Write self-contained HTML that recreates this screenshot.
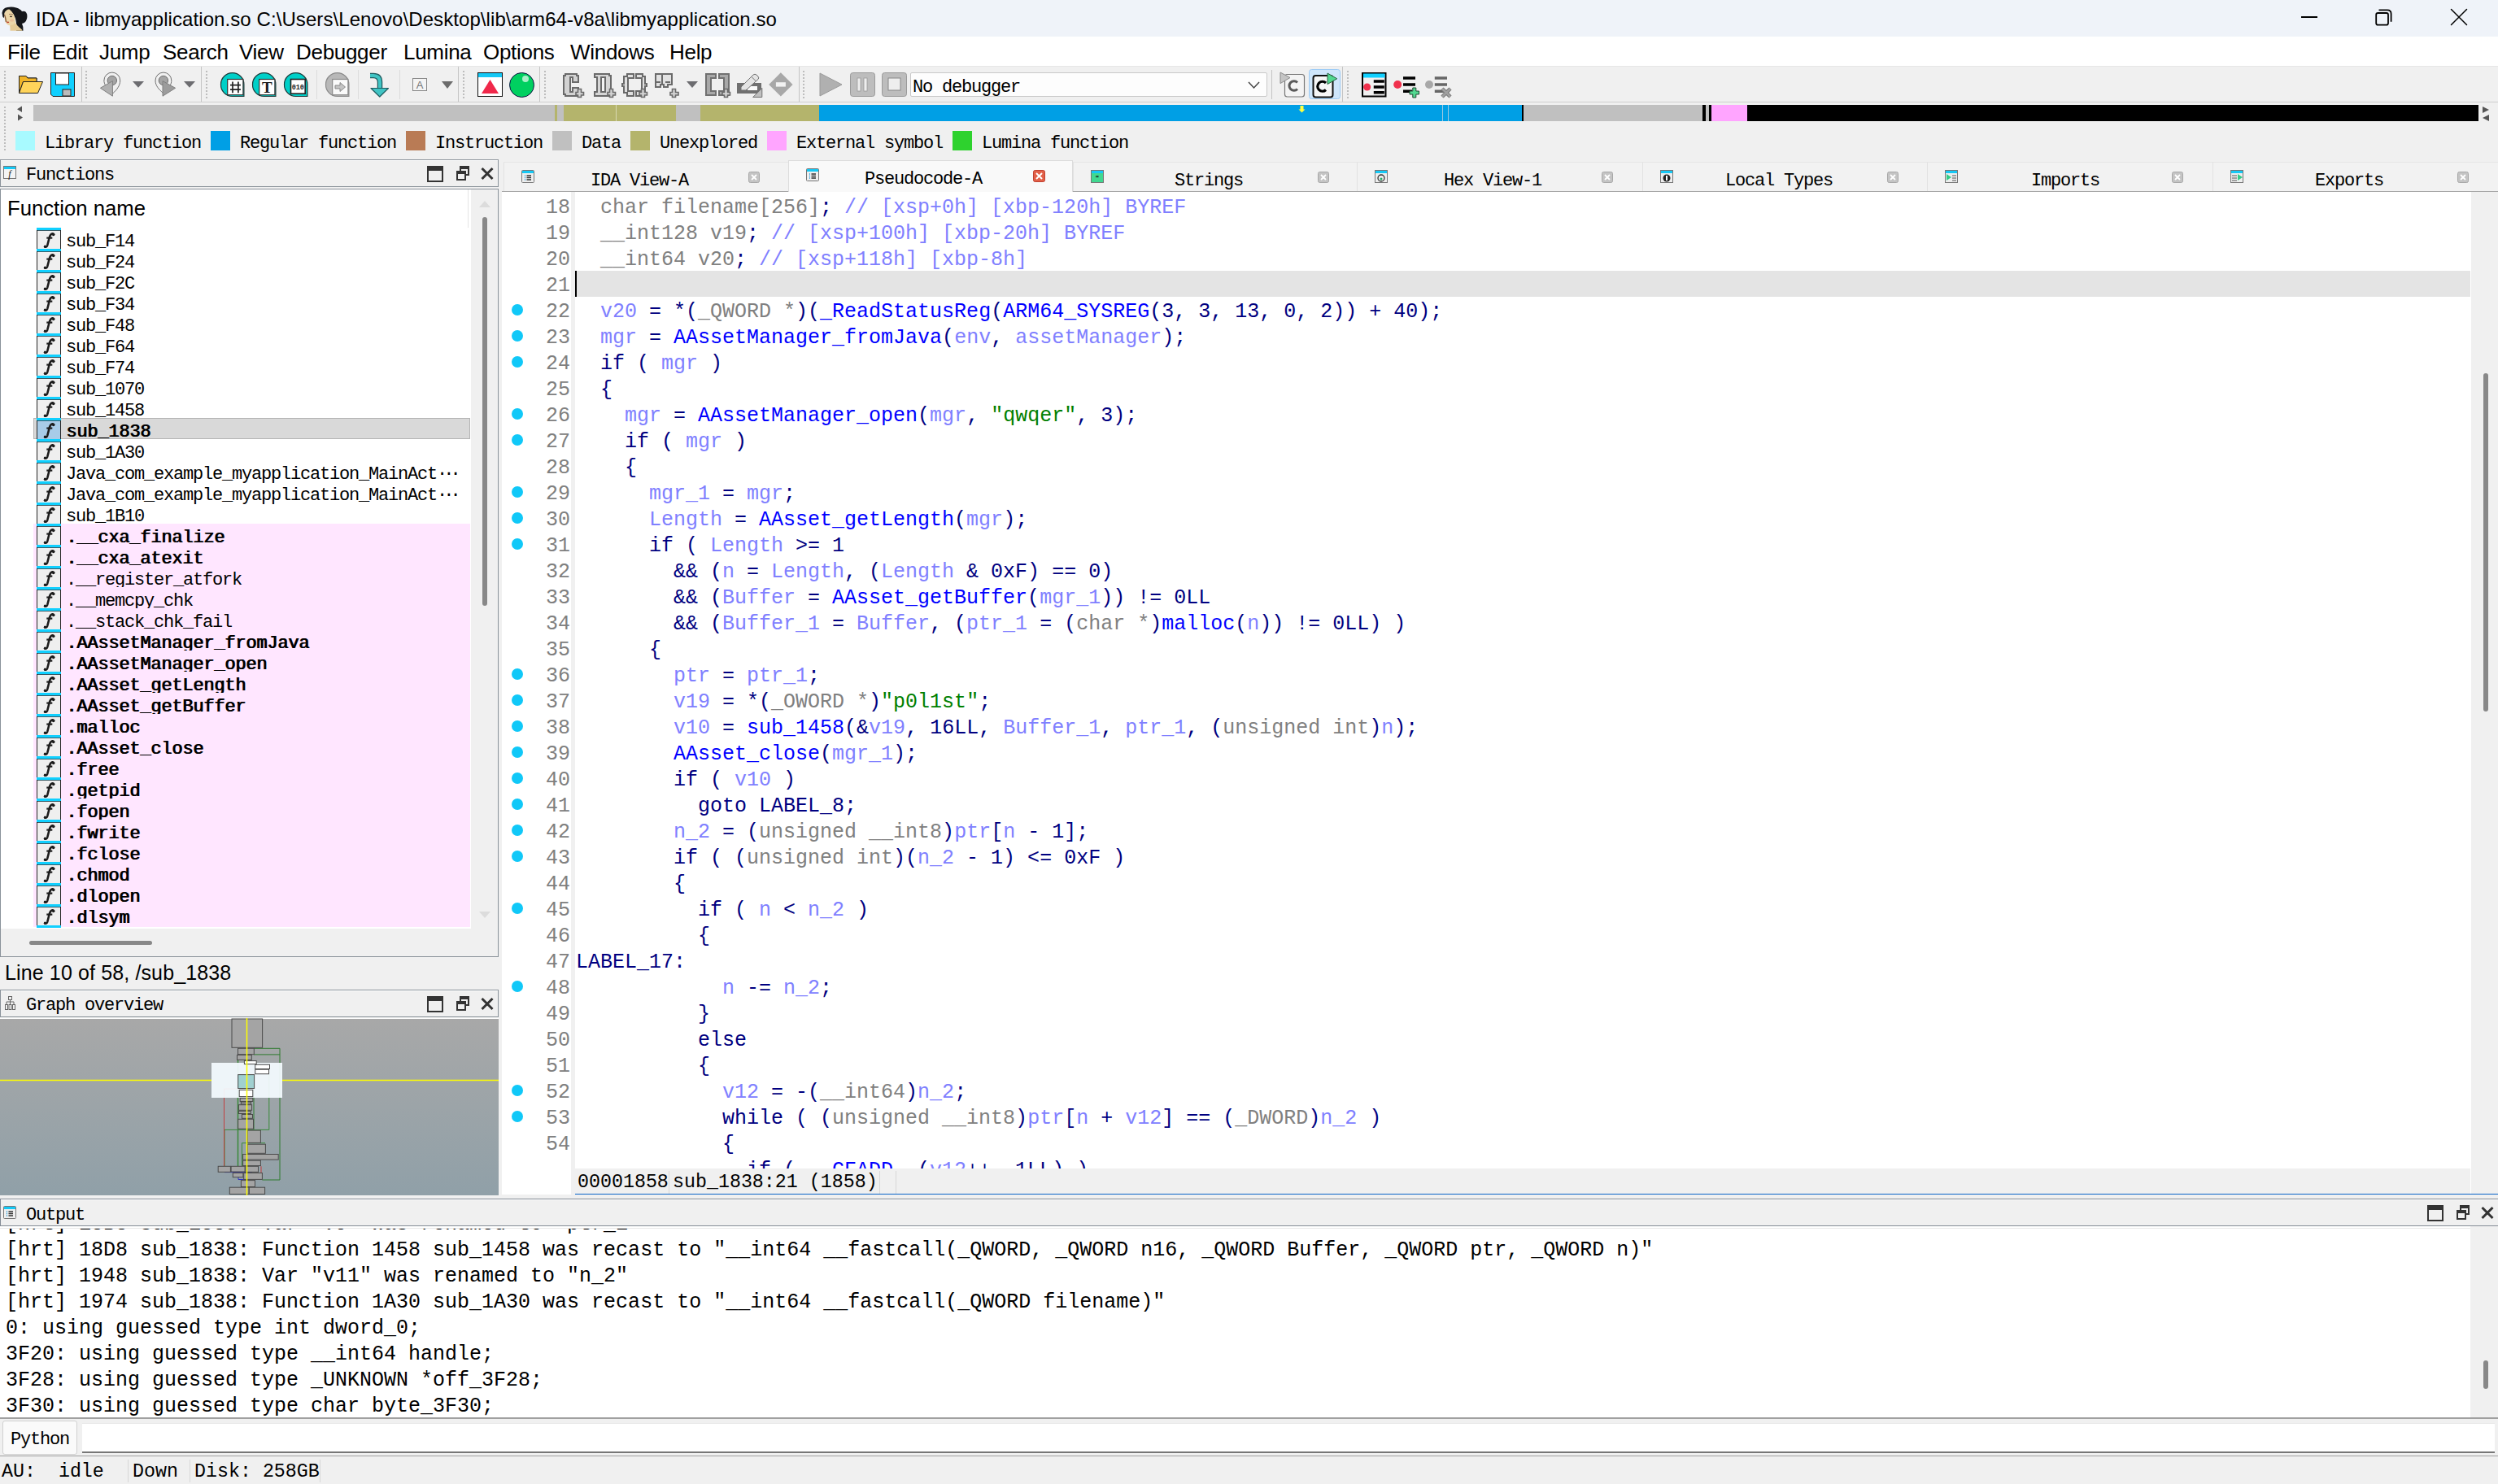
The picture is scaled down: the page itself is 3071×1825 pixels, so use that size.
<!DOCTYPE html><html><head><meta charset="utf-8"><style>
*{margin:0;padding:0;box-sizing:border-box}
html,body{width:3071px;height:1825px;overflow:hidden;background:#f0f0f0}
#root{position:relative;width:3071px;height:1825px;overflow:hidden;background:#f0f0f0}
.sans{font-family:"Liberation Sans",sans-serif;white-space:pre;line-height:1}
.ns{font-family:"Liberation Mono",monospace;font-size:22px;letter-spacing:-1.2px;white-space:pre;line-height:1;color:#000}
.code{font-family:"Liberation Mono",monospace;font-size:25px;white-space:pre;line-height:32px;color:#000080}
.v{color:#8080ff}.t{color:#808080}.f{color:#0000ff}.s{color:#008000}.k{color:#000080}
svg{position:absolute;overflow:visible}
</style></head><body><div id="root"><div style="position:absolute;left:0px;top:0px;width:3071px;height:45px;background:#eff3f9"></div>
<svg style="left:0;top:4px" width="40" height="40" viewBox="0 0 40 40">
<path d="M2.5 12 Q3 6 9 5 Q15 4 20 5.5 Q25 7 27 10 Q32 8.5 33.3 14 Q34 20 30.5 23.5 Q29 24.5 27 25 Q29 29 28.5 33.7 L20 33.7 Q21 27 19.5 21 Q18 14 12 8.5 Q8 8 6 11 Q5 15 5 18 L3.5 17 Z" fill="#15171b"/>
<path d="M5.5 12 Q8 7 11.5 7.5 Q15 10 17 14 Q19 19 19 24 Q17.5 27.5 12 27.3 Q8.5 27 6.5 23 Q5 18 5.5 12 Z" fill="#ecd6a8"/>
<path d="M12 27.2 Q16 27.5 19 24 Q20.5 27 23.5 29.5 Q26.5 31.5 27.5 33.7 H12.5 Q12.8 30 12 27.2 Z" fill="#e6cb96"/>
<path d="M5.5 14 Q7 18 7.5 23" stroke="#7a5030" stroke-width="1.2" fill="none"/>
<ellipse cx="13.5" cy="16.4" rx="1.4" ry="0.8" fill="#3a3028"/>
<path d="M11 13.5 Q14 12.8 16 14" stroke="#8a6a50" stroke-width="0.8" fill="none"/>
<ellipse cx="9.6" cy="23.4" rx="1.6" ry="0.8" fill="#c04030"/>
<ellipse cx="14.5" cy="21" rx="2.5" ry="1.8" fill="#e8b090" opacity="0.6"/>
</svg>
<div class="sans" style="position:absolute;left:44px;top:12px;font-size:24px;letter-spacing:0.08px;color:#000">IDA - libmyapplication.so C:\Users\Lenovo\Desktop\lib\arm64-v8a\libmyapplication.so</div>
<div style="position:absolute;left:2829px;top:20px;width:20px;height:2px;background:#000"></div>
<svg style="left:2915px;top:8px" width="30" height="28" viewBox="2915 8 30 28">
<rect x="2921.2" y="16" width="14.8" height="14.6" rx="2.2" fill="none" stroke="#000" stroke-width="1.8"/>
<path d="M2924.5 12.4 H2935 Q2939.6 12.4 2939.6 17 V26.8" fill="none" stroke="#000" stroke-width="1.8"/>
</svg>
<svg style="left:3010px;top:8px" width="26" height="26" viewBox="3010 8 26 26">
<path d="M3013.5 11.5 L3032.5 30.5 M3032.5 11.5 L3013.5 30.5" stroke="#000" stroke-width="1.5" stroke-linecap="round"/>
</svg>
<div style="position:absolute;left:0px;top:45px;width:3071px;height:37px;background:#fff"></div>
<div class="sans" style="position:absolute;left:9px;top:51px;font-size:26px;letter-spacing:-0.3px;color:#000">File</div>
<div class="sans" style="position:absolute;left:64px;top:51px;font-size:26px;letter-spacing:-0.3px;color:#000">Edit</div>
<div class="sans" style="position:absolute;left:122px;top:51px;font-size:26px;letter-spacing:-0.3px;color:#000">Jump</div>
<div class="sans" style="position:absolute;left:200px;top:51px;font-size:26px;letter-spacing:-0.3px;color:#000">Search</div>
<div class="sans" style="position:absolute;left:294px;top:51px;font-size:26px;letter-spacing:-0.3px;color:#000">View</div>
<div class="sans" style="position:absolute;left:364px;top:51px;font-size:26px;letter-spacing:-0.3px;color:#000">Debugger</div>
<div class="sans" style="position:absolute;left:496px;top:51px;font-size:26px;letter-spacing:-0.3px;color:#000">Lumina</div>
<div class="sans" style="position:absolute;left:594px;top:51px;font-size:26px;letter-spacing:-0.3px;color:#000">Options</div>
<div class="sans" style="position:absolute;left:701px;top:51px;font-size:26px;letter-spacing:-0.3px;color:#000">Windows</div>
<div class="sans" style="position:absolute;left:823px;top:51px;font-size:26px;letter-spacing:-0.3px;color:#000">Help</div>
<div style="position:absolute;left:0px;top:81px;width:3071px;height:1px;background:#e6e6e6"></div>
<div style="position:absolute;left:0px;top:82px;width:3071px;height:43px;background:#f0f0f0"></div>
<div style="position:absolute;left:0px;top:125px;width:3071px;height:1px;background:#cfcfcf"></div>
<div style="position:absolute;left:5px;top:87px;width:2px;height:34px;background:repeating-linear-gradient(#bdbdbd 0 2px,transparent 2px 4px)"></div>
<div style="position:absolute;left:100px;top:82px;width:1px;height:43px;background:#c4c4c4"></div>
<div style="position:absolute;left:105px;top:87px;width:2px;height:34px;background:repeating-linear-gradient(#bdbdbd 0 2px,transparent 2px 4px)"></div>
<div style="position:absolute;left:247px;top:82px;width:1px;height:43px;background:#c4c4c4"></div>
<div style="position:absolute;left:253px;top:87px;width:2px;height:34px;background:repeating-linear-gradient(#bdbdbd 0 2px,transparent 2px 4px)"></div>
<div style="position:absolute;left:563px;top:82px;width:1px;height:43px;background:#c4c4c4"></div>
<div style="position:absolute;left:569px;top:87px;width:2px;height:34px;background:repeating-linear-gradient(#bdbdbd 0 2px,transparent 2px 4px)"></div>
<div style="position:absolute;left:663px;top:82px;width:1px;height:43px;background:#c4c4c4"></div>
<div style="position:absolute;left:669px;top:87px;width:2px;height:34px;background:repeating-linear-gradient(#bdbdbd 0 2px,transparent 2px 4px)"></div>
<div style="position:absolute;left:982px;top:82px;width:1px;height:43px;background:#c4c4c4"></div>
<div style="position:absolute;left:987px;top:87px;width:2px;height:34px;background:repeating-linear-gradient(#bdbdbd 0 2px,transparent 2px 4px)"></div>
<div style="position:absolute;left:1563px;top:86px;width:1px;height:36px;background:#c4c4c4"></div>
<div style="position:absolute;left:1650px;top:82px;width:1px;height:43px;background:#c4c4c4"></div>
<div style="position:absolute;left:1656px;top:87px;width:2px;height:34px;background:repeating-linear-gradient(#bdbdbd 0 2px,transparent 2px 4px)"></div>
<div style="position:absolute;left:389px;top:86px;width:1px;height:36px;background:#dcdcdc"></div>
<div style="position:absolute;left:440px;top:86px;width:1px;height:36px;background:#dcdcdc"></div>
<div style="position:absolute;left:491px;top:86px;width:1px;height:36px;background:#dcdcdc"></div>
<svg style="left:22px;top:92px" width="32" height="24" viewBox="0 0 32 24">
<path d="M1.5 1.5 H10 L12 4 H23 V7.5 H1.5 Z" fill="#f0b428" stroke="#222" stroke-width="1"/>
<path d="M1.5 1.5 H10 L12 4 H23 V8.5 H6.5 L1.5 22.5 Z" fill="#f0b428" stroke="#222" stroke-width="1"/>
<path d="M6.5 8.5 H30.5 L24.5 22.5 H1.5 Z" fill="#ffd45a" stroke="#222" stroke-width="1"/>
</svg>
<svg style="left:62px;top:89px" width="31" height="30" viewBox="0 0 31 30">
<path d="M0.5 0.5 H29.5 V29.5 H3 L0.5 27 Z" fill="#10d0ff" stroke="#222" stroke-width="1"/>
<rect x="6.5" y="1" width="16" height="14" fill="#fff" stroke="#222" stroke-width="1"/>
<rect x="15" y="21" width="10" height="8" fill="#bbb" stroke="#222" stroke-width="1"/>
</svg>
<svg style="left:100px;top:84px" width="150" height="40" viewBox="0 0 150 40">
<path d="M39 30.6 C30 24 27.9 19 27.9 15 A9.9 9.9 0 1 1 47.7 15 C47.7 21 44 26 39 30.6 Z" fill="none" stroke="#707070" stroke-width="1"/>
<circle cx="37.8" cy="15" r="5.7" fill="#a4a4a4" stroke="#707070" stroke-width="1"/>
<path d="M23.4 24.3 L38.4 15.6 L38.4 34.2 Z" fill="#b0b0b0" stroke="#808080" stroke-width="1"/>
<path d="M163 16 H177 L170 23.7 Z" fill="#6c6c70" transform="translate(-100,0)"/>
<path d="M100.9 30.6 C95 26 91 21 91 15 A9.9 9.9 0 1 1 110.8 15 C110.8 19 108.9 24 100.9 30.6 Z" fill="none" stroke="#707070" stroke-width="1"/>
<circle cx="100.9" cy="15" r="5.7" fill="#a4a4a4" stroke="#707070" stroke-width="1"/>
<path d="M100 15.6 L115.6 24.3 L100 34.2 Z" fill="#9c9c9c" stroke="#808080" stroke-width="1"/>
<path d="M126 16 H140 L133 23.7 Z" fill="#6c6c70"/>
</svg>
<svg style="left:271px;top:84px" width="31" height="36" viewBox="0 0 31 36">
<path d="M0.5 19.8 A14.2 14.2 0 0 1 28.9 19.8 V34.5 H14.7 A14.2 14.2 0 0 1 0.5 19.8 Z" fill="#00d0c8" stroke="#1e3a3a" stroke-width="1.2"/>
<rect x="8.7" y="13.5" width="19.2" height="19.2" fill="#fff" stroke="#333" stroke-width="1.2"/><path d="M15 16.5 V30.3 M21.9 16.5 V30.3 M12 20.7 H24.9 M12 26.1 H24.9" stroke="#222" stroke-width="1.7"/>
</svg>
<svg style="left:310px;top:84px" width="31" height="36" viewBox="0 0 31 36">
<path d="M0.5 19.8 A14.2 14.2 0 0 1 28.9 19.8 V34.5 H14.7 A14.2 14.2 0 0 1 0.5 19.8 Z" fill="#00d0c8" stroke="#1e3a3a" stroke-width="1.2"/>
<rect x="8.7" y="13.5" width="19.2" height="19.2" fill="#fff" stroke="#333" stroke-width="1.2"/><text x="18.3" y="30" font-family="Liberation Serif" font-weight="bold" font-size="19" text-anchor="middle" fill="#1a1a1a">T</text>
</svg>
<svg style="left:349px;top:84px" width="31" height="36" viewBox="0 0 31 36">
<path d="M0.5 19.8 A14.2 14.2 0 0 1 28.9 19.8 V34.5 H14.7 A14.2 14.2 0 0 1 0.5 19.8 Z" fill="#00d0c8" stroke="#1e3a3a" stroke-width="1.2"/>
<rect x="8.5" y="13.5" width="17.7" height="17.7" fill="#fff" stroke="#222" stroke-width="1.6"/><text x="17.3" y="26" font-family="Liberation Mono" font-weight="bold" font-size="8.5" text-anchor="middle" fill="#222">010</text>
</svg>
<svg style="left:400px;top:84px" width="31" height="36" viewBox="0 0 31 36">
<path d="M0.5 19.8 A14.2 14.2 0 0 1 28.9 19.8 V34.5 H14.7 A14.2 14.2 0 0 1 0.5 19.8 Z" fill="#b8b8b8" stroke="#8a8a8a" stroke-width="1.2"/>
<rect x="8.7" y="13.5" width="19.2" height="19.2" fill="#fafafa" stroke="#8a8a8a" stroke-width="1.2"/>
<path d="M12 21 H18 V17.5 L24.5 23 L18 28.5 V25 H12 Z" fill="#c4c4c4" stroke="#888" stroke-width="1"/>
</svg>
<svg style="left:450px;top:84px" width="32" height="38" viewBox="450 84 32 38">
<path d="M455 93 H459 Q467 93 467 101 V110" fill="none" stroke="#1f5c60" stroke-width="6.5"/>
<path d="M455 93 H459 Q467 93 467 101 V111" fill="none" stroke="#40c4c4" stroke-width="4"/>
<path d="M456 108.5 H477.5 L466.8 119 Z" fill="#40c4c4" stroke="#1f5c60" stroke-width="1.2" stroke-linejoin="round"/>
</svg>
<svg style="left:507px;top:96px" width="18" height="16" viewBox="0 0 18 16">
<rect x="0.5" y="0.5" width="17" height="15" fill="#f4f4f4" stroke="#888"/>
<text x="9" y="13" font-family="Liberation Sans" font-size="13" text-anchor="middle" fill="#777">A</text>
</svg>
<svg style="left:543px;top:100px" width="14" height="9" viewBox="0 0 14 9"><path d="M0 0 H14 L7 9 Z" fill="#6c6c6c"/></svg>
<svg style="left:587px;top:89px" width="31" height="30" viewBox="0 0 31 30">
<rect x="0.5" y="0.5" width="30" height="29" fill="#fff" stroke="#111" stroke-width="1"/>
<rect x="1" y="1" width="29" height="5" fill="#15c8f5"/>
<path d="M15.5 9 L26 26 H5 Z" fill="#f0284a"/>
</svg>
<svg style="left:626px;top:89px" width="31" height="31" viewBox="0 0 31 31">
<circle cx="15.5" cy="15.5" r="15" fill="#00d060" stroke="#114" stroke-width="1"/>
<circle cx="20" cy="8" r="4" fill="#a8f0c8"/>
</svg>
<svg style="left:688px;top:85px" width="300" height="40" viewBox="0 0 300 40">
<g stroke="#6a6a6a" stroke-width="2" stroke-linejoin="miter">
<path d="M7 6 H21 V8 H23 V16 H16 V10 H13 V28 H16 V23 H23 V31 H21 V33 H7 V31 H5 V8 H7 Z" fill="#d2d2d2"/>
<path d="M43 6 H61 V8 H63 V33 H43 V28 H46 V10 H43 Z" fill="#d6d6d6"/>
<rect x="51" y="10" width="5" height="18" fill="#f4f4f4"/>
<path d="M83 6 H91 V11 H84 V27 H91 V33 H83 V29 H79 V21 H77 V18 H79 V9 H83 Z" fill="#e0e0e0"/>
<path d="M94 6 H102 V9 H105 V18 H107 V21 H105 V29 H102 V33 H94 V27 H101 V11 H94 Z" fill="#e0e0e0"/>
<path d="M118 6 H138 V19 H133 V22 H128 V19 H124 V22 H118 Z" fill="#e2e2e2"/>
<path d="M126 6 V19 M118 16 H124 M130 16 H136" fill="none"/>
</g>
<g stroke="#6a6a6a" stroke-width="1.6" fill="#d4d4d4">
<path d="M22.5 24.5 H26.5 V28.5 H29.5 V32 H26.5 V34.5 H22.5 V32 H20 V28.5 H22.5 Z"/>
<path d="M61.5 24.5 H65.5 V28.5 H68.5 V32 H65.5 V34.5 H61.5 V32 H59 V28.5 H61.5 Z"/>
<path d="M100.5 24.5 H104.5 V28.5 H107.5 V32 H104.5 V34.5 H100.5 V32 H98 V28.5 H100.5 Z"/>
<path d="M138.5 24.5 H142.5 V28.5 H146 V32 H142.5 V34.5 H138.5 V32 H136 V28.5 H138.5 Z"/>
</g>
<path d="M156 15 H170 L163 23 Z" fill="#6c6c70"/>
<g stroke="#707070" stroke-width="2" fill="#a8a8a8">
<path d="M180 6 H192 V11 H186 V27 H192 V32 H180 Z"/>
<path d="M196 6 H208 V32 H196 V27 H202 V11 H196 Z"/>
</g>
<path d="M202.5 24.5 H206.5 V28.5 H209.5 V32 H206.5 V34.5 H202.5 V32 H200 V28.5 H202.5 Z" fill="#d4d4d4" stroke="#6a6a6a" stroke-width="1.6"/>
<rect x="218" y="17" width="30" height="13" fill="#707070"/>
<rect x="231" y="21" width="12" height="5" fill="#fafafa"/>
<path d="M223 22 L238 7 Q240 5.5 242 7 L244 9 Q245.5 11 244 12.5 L229 26 H223 Z" fill="#e4e4e4" stroke="#707070" stroke-width="1"/>
<path d="M236 9.5 L241.5 15" stroke="#707070" stroke-width="1"/>
<path d="M237.7 34.5 H248.8 V23.4 Z" fill="#c0c0c0" stroke="#707070" stroke-width="1"/>
<path d="M271.9 4.2 L286.6 18.9 L271.9 33.6 L257.2 18.9 Z" fill="#a8a8a8"/>
<rect x="265.9" y="16.2" width="12" height="5.4" fill="#f2f2f2"/>
</svg>
<svg style="left:1007px;top:89px" width="30" height="30" viewBox="0 0 30 30">
<path d="M1 1 L28 15 L1 29 Z" fill="#b0b0b0" stroke="#999" stroke-width="1"/>
</svg>
<svg style="left:1045px;top:89px" width="31" height="30" viewBox="0 0 31 30">
<rect x="0.5" y="0.5" width="30" height="29" rx="3" fill="#bdbdbd" stroke="#9a9a9a"/>
<rect x="9" y="7" width="4" height="16" fill="#eee" stroke="#999" stroke-width="0.8"/>
<rect x="17" y="7" width="4" height="16" fill="#eee" stroke="#999" stroke-width="0.8"/>
</svg>
<svg style="left:1084px;top:89px" width="31" height="30" viewBox="0 0 31 30">
<rect x="0.5" y="0.5" width="30" height="29" rx="3" fill="#bdbdbd" stroke="#9a9a9a"/>
<rect x="8" y="7" width="15" height="15" fill="#eee" stroke="#888" stroke-width="1"/>
</svg>
<div style="position:absolute;left:1119px;top:89px;width:439px;height:30px;background:#fdfdfd;border:1px solid #c8c8c8;border-radius:2px"></div>
<div class="ns" style="position:absolute;left:1122px;top:97px;">No debugger</div>
<svg style="left:1534px;top:100px" width="15" height="9" viewBox="0 0 15 9"><path d="M1 1 L7.5 8 L14 1" fill="none" stroke="#444" stroke-width="1.5"/></svg>
<svg style="left:1560px;top:80px" width="240" height="45" viewBox="1560 80 240 45">
<rect x="1579.5" y="91.5" width="24" height="27.5" rx="3" fill="#f4f4f4" stroke="#777" stroke-width="1.2"/>
<path d="M1574 89 L1586 95.5 L1574 102.6 Z" fill="#c4c4c4" stroke="#8a8a8a" stroke-width="1"/>
<path d="M1595 101.5 A5.8 5.8 0 1 0 1595 109.5" fill="none" stroke="#5a5a5a" stroke-width="3"/>
<rect x="1609.5" y="85.5" width="38" height="36" rx="3" fill="#cfe6fb" stroke="#9ccbf5" stroke-width="1"/>
<rect x="1614.5" y="93" width="24" height="26.5" rx="3" fill="#f6f6f6" stroke="#111" stroke-width="2"/>
<path d="M1630 102 A6 6 0 1 0 1630 110.5" fill="none" stroke="#000" stroke-width="3.2"/>
<path d="M1632 90 L1643.7 96.8 L1632 103.5 Z" fill="#52d890" stroke="#2a6040" stroke-width="1"/>
<rect x="1675" y="90" width="28.5" height="28.5" fill="#f0f0f0" stroke="#000" stroke-width="2"/>
<rect x="1676" y="90.5" width="26.5" height="5" fill="#10d0ff"/>
<circle cx="1680.7" cy="107" r="4.5" fill="#f0304c"/>
<path d="M1688.8 100 H1701.8 M1688.8 107 H1701.8 M1688.8 113.8 H1701.8" stroke="#000" stroke-width="3.5"/>
<circle cx="1718.2" cy="104" r="5" fill="#f0304c"/>
<path d="M1725 95.9 H1740 M1725 104 H1740 M1725 112.2 H1736" stroke="#000" stroke-width="3.5"/>
<path d="M1736.8 108 H1740.8 V112 H1744.5 V116 H1740.8 V120 H1736.8 V116 H1733 V112 H1736.8 Z" fill="#52d890" stroke="#1e4a30" stroke-width="1"/>
<circle cx="1757" cy="104" r="5" fill="#a8a8a8"/>
<path d="M1763.8 95.9 H1779 M1763.8 104 H1779 M1763.8 112.2 H1775" stroke="#666" stroke-width="3.5"/>
<path d="M1773 109 L1783 119 M1783 109 L1773 119" stroke="#777" stroke-width="4.5"/>
<path d="M1773 109 L1783 119 M1783 109 L1773 119" stroke="#a0a0a0" stroke-width="2.5"/>
</svg>
<div style="position:absolute;left:5px;top:131px;width:2px;height:56px;background:repeating-linear-gradient(#bdbdbd 0 2px,transparent 2px 4px)"></div>
<svg style="left:0;top:130px" width="40" height="20" viewBox="0 130 40 20"><path d="M27 130.5 L21 134.3 L27 138 Z M22 140.5 L28 144.5 L22 148.5 Z" fill="#555"/></svg>
<svg style="left:3050px;top:130px" width="12" height="20" viewBox="0 0 12 20"><path d="M2 1 L10 5 L2 9 Z M10 11 L2 15 L10 19 Z" fill="#555"/></svg>
<div style="position:absolute;left:41px;top:129px;width:641px;height:20px;background:#c0c0c0"></div>
<div style="position:absolute;left:682px;top:129px;width:3px;height:20px;background:#b4b46c"></div>
<div style="position:absolute;left:685px;top:129px;width:8px;height:20px;background:#c0c0c0"></div>
<div style="position:absolute;left:693px;top:129px;width:64px;height:20px;background:#b4b46c"></div>
<div style="position:absolute;left:757px;top:129px;width:1px;height:20px;background:#d8d8b0"></div>
<div style="position:absolute;left:758px;top:129px;width:73px;height:20px;background:#b4b46c"></div>
<div style="position:absolute;left:831px;top:129px;width:30px;height:20px;background:#c0c0c0"></div>
<div style="position:absolute;left:861px;top:129px;width:146px;height:20px;background:#b4b46c"></div>
<div style="position:absolute;left:1007px;top:129px;width:864px;height:20px;background:#009fe5"></div>
<div style="position:absolute;left:1871px;top:129px;width:2px;height:20px;background:#000"></div>
<div style="position:absolute;left:1873px;top:129px;width:220px;height:20px;background:#c0c0c0"></div>
<div style="position:absolute;left:2093px;top:129px;width:4px;height:20px;background:#000"></div>
<div style="position:absolute;left:2097px;top:129px;width:4px;height:20px;background:#c0c0c0"></div>
<div style="position:absolute;left:2101px;top:129px;width:3px;height:20px;background:#000"></div>
<div style="position:absolute;left:2104px;top:129px;width:44px;height:20px;background:#ffa5ff"></div>
<div style="position:absolute;left:2148px;top:129px;width:899px;height:20px;background:#000"></div>
<div style="position:absolute;left:1773px;top:129px;width:1px;height:20px;background:#9cc8e0"></div>
<div style="position:absolute;left:1780px;top:129px;width:1px;height:20px;background:#9cc8e0"></div>
<svg style="left:1596px;top:130px" width="9" height="9" viewBox="0 0 9 9"><path d="M2.5 0 H6.5 V4.5 H8.5 L4.5 8.5 L0.5 4.5 H2.5 Z" fill="#ffff40"/></svg>
<div style="position:absolute;left:19px;top:161px;width:24px;height:24px;background:#a8faff"></div>
<div class="ns" style="position:absolute;left:55px;top:166px;">Library function</div>
<div style="position:absolute;left:259px;top:161px;width:24px;height:24px;background:#009fe5"></div>
<div class="ns" style="position:absolute;left:295px;top:166px;">Regular function</div>
<div style="position:absolute;left:499px;top:161px;width:24px;height:24px;background:#b97b55"></div>
<div class="ns" style="position:absolute;left:535px;top:166px;">Instruction</div>
<div style="position:absolute;left:679px;top:161px;width:24px;height:24px;background:#c0c0c0"></div>
<div class="ns" style="position:absolute;left:715px;top:166px;">Data</div>
<div style="position:absolute;left:775px;top:161px;width:24px;height:24px;background:#b4b46c"></div>
<div class="ns" style="position:absolute;left:811px;top:166px;">Unexplored</div>
<div style="position:absolute;left:943px;top:161px;width:24px;height:24px;background:#ffa5ff"></div>
<div class="ns" style="position:absolute;left:979px;top:166px;">External symbol</div>
<div style="position:absolute;left:1171px;top:161px;width:24px;height:24px;background:#2ed22e"></div>
<div class="ns" style="position:absolute;left:1207px;top:166px;">Lumina function</div>
<div style="position:absolute;left:0px;top:196px;width:613px;height:34px;background:#f0f0f0;border:1px solid #8a929a;box-shadow:inset 0 1px 0 #fff"></div>
<svg style="left:4px;top:204px" width="16" height="16" viewBox="0 0 16 16"><rect x="0.5" y="0.5" width="15" height="15" fill="#f4f4f4" stroke="#777"/><rect x="1" y="1" width="14" height="3" fill="#15c8f5"/><text x="8" y="14" font-family="Liberation Serif" font-style="italic" font-size="12" text-anchor="middle" fill="#222">f</text></svg>
<div class="ns" style="position:absolute;left:32px;top:205px;">Functions</div>
<svg style="left:525px;top:204px" width="84" height="22" viewBox="0 0 84 22"><g fill="none" stroke="#333" stroke-width="2"><rect x="1" y="1" width="18" height="18"/><rect x="41" y="1" width="10" height="10"/><rect x="37" y="7" width="10" height="10" fill="#f0f0f0"/><path d="M67.5 3 L80.5 16 M80.5 3 L67.5 16" stroke-width="3"/></g><rect x="1" y="1" width="18" height="5" fill="#333"/><rect x="41" y="1" width="10" height="3" fill="#333"/><rect x="37" y="7" width="10" height="3" fill="#333"/></svg>
<div style="position:absolute;left:0px;top:232px;width:613px;height:945px;background:#fff;border:1px solid #8a929a"></div>
<div class="sans" style="position:absolute;left:9px;top:244px;font-size:25.7px;color:#000">Function name</div>
<div style="position:absolute;left:575px;top:233px;width:1px;height:47px;background:#e4e4e4"></div>
<div style="position:absolute;left:579px;top:233px;width:33px;height:943px;background:#f0f0f0"></div>
<svg style="left:588px;top:246px" width="16" height="10" viewBox="0 0 16 10"><path d="M1 9 L8 1 L15 9 Z" fill="#dcdcdc"/></svg>
<svg style="left:588px;top:1120px" width="16" height="10" viewBox="0 0 16 10"><path d="M1 1 L8 9 L15 1 Z" fill="#dcdcdc"/></svg>
<div style="position:absolute;left:593px;top:267px;width:6px;height:478px;background:#888;border-radius:3px"></div>
<div style="position:absolute;left:1px;top:1142px;width:578px;height:34px;background:#f0f0f0"></div>
<div style="position:absolute;left:36px;top:1157px;width:151px;height:5px;background:#888;border-radius:3px"></div>
<div style="position:absolute;left:45px;top:280px;width:30px;height:26px;background:#efefef;border-left:1.5px solid #262626;border-right:1.5px solid #262626"></div>
<div style="position:absolute;left:45px;top:280px;width:30px;height:3px;background:#10d0ff"></div>
<div style="position:absolute;left:46px;top:283px;width:28px;height:1px;background:#3a5a64"></div>
<div class="ns" style="position:absolute;left:81px;top:287px;">sub_F14</div>
<div style="position:absolute;left:45px;top:306px;width:30px;height:26px;background:#efefef;border-left:1.5px solid #262626;border-right:1.5px solid #262626"></div>
<div style="position:absolute;left:45px;top:306px;width:30px;height:3px;background:#10d0ff"></div>
<div style="position:absolute;left:46px;top:309px;width:28px;height:1px;background:#3a5a64"></div>
<div class="ns" style="position:absolute;left:81px;top:313px;">sub_F24</div>
<div style="position:absolute;left:45px;top:332px;width:30px;height:26px;background:#efefef;border-left:1.5px solid #262626;border-right:1.5px solid #262626"></div>
<div style="position:absolute;left:45px;top:332px;width:30px;height:3px;background:#10d0ff"></div>
<div style="position:absolute;left:46px;top:335px;width:28px;height:1px;background:#3a5a64"></div>
<div class="ns" style="position:absolute;left:81px;top:339px;">sub_F2C</div>
<div style="position:absolute;left:45px;top:358px;width:30px;height:26px;background:#efefef;border-left:1.5px solid #262626;border-right:1.5px solid #262626"></div>
<div style="position:absolute;left:45px;top:358px;width:30px;height:3px;background:#10d0ff"></div>
<div style="position:absolute;left:46px;top:361px;width:28px;height:1px;background:#3a5a64"></div>
<div class="ns" style="position:absolute;left:81px;top:365px;">sub_F34</div>
<div style="position:absolute;left:45px;top:384px;width:30px;height:26px;background:#efefef;border-left:1.5px solid #262626;border-right:1.5px solid #262626"></div>
<div style="position:absolute;left:45px;top:384px;width:30px;height:3px;background:#10d0ff"></div>
<div style="position:absolute;left:46px;top:387px;width:28px;height:1px;background:#3a5a64"></div>
<div class="ns" style="position:absolute;left:81px;top:391px;">sub_F48</div>
<div style="position:absolute;left:45px;top:410px;width:30px;height:26px;background:#efefef;border-left:1.5px solid #262626;border-right:1.5px solid #262626"></div>
<div style="position:absolute;left:45px;top:410px;width:30px;height:3px;background:#10d0ff"></div>
<div style="position:absolute;left:46px;top:413px;width:28px;height:1px;background:#3a5a64"></div>
<div class="ns" style="position:absolute;left:81px;top:417px;">sub_F64</div>
<div style="position:absolute;left:45px;top:436px;width:30px;height:26px;background:#efefef;border-left:1.5px solid #262626;border-right:1.5px solid #262626"></div>
<div style="position:absolute;left:45px;top:436px;width:30px;height:3px;background:#10d0ff"></div>
<div style="position:absolute;left:46px;top:439px;width:28px;height:1px;background:#3a5a64"></div>
<div class="ns" style="position:absolute;left:81px;top:443px;">sub_F74</div>
<div style="position:absolute;left:45px;top:462px;width:30px;height:26px;background:#efefef;border-left:1.5px solid #262626;border-right:1.5px solid #262626"></div>
<div style="position:absolute;left:45px;top:462px;width:30px;height:3px;background:#10d0ff"></div>
<div style="position:absolute;left:46px;top:465px;width:28px;height:1px;background:#3a5a64"></div>
<div class="ns" style="position:absolute;left:81px;top:469px;">sub_1070</div>
<div style="position:absolute;left:45px;top:488px;width:30px;height:26px;background:#efefef;border-left:1.5px solid #262626;border-right:1.5px solid #262626"></div>
<div style="position:absolute;left:45px;top:488px;width:30px;height:3px;background:#10d0ff"></div>
<div style="position:absolute;left:46px;top:491px;width:28px;height:1px;background:#3a5a64"></div>
<div class="ns" style="position:absolute;left:81px;top:495px;">sub_1458</div>
<div style="position:absolute;left:41px;top:514px;width:537px;height:26px;background:#d9d9d9;border:1px solid #b4b4b4"></div>
<div style="position:absolute;left:45px;top:514px;width:30px;height:26px;background:#a8cce8;border-left:1.5px solid #262626;border-right:1.5px solid #262626"></div>
<div style="position:absolute;left:45px;top:514px;width:30px;height:3px;background:#10d0ff"></div>
<div style="position:absolute;left:46px;top:517px;width:28px;height:1px;background:#3a5a64"></div>
<div class="ns" style="position:absolute;left:81px;top:521px;text-shadow:1px 0 0 #000;letter-spacing:-0.2px;">sub_1838</div>
<div style="position:absolute;left:45px;top:540px;width:30px;height:26px;background:#efefef;border-left:1.5px solid #262626;border-right:1.5px solid #262626"></div>
<div style="position:absolute;left:45px;top:540px;width:30px;height:3px;background:#10d0ff"></div>
<div style="position:absolute;left:46px;top:543px;width:28px;height:1px;background:#3a5a64"></div>
<div class="ns" style="position:absolute;left:81px;top:547px;">sub_1A30</div>
<div style="position:absolute;left:45px;top:566px;width:30px;height:26px;background:#efefef;border-left:1.5px solid #262626;border-right:1.5px solid #262626"></div>
<div style="position:absolute;left:45px;top:566px;width:30px;height:3px;background:#10d0ff"></div>
<div style="position:absolute;left:46px;top:569px;width:28px;height:1px;background:#3a5a64"></div>
<div class="ns" style="position:absolute;left:81px;top:573px;">Java_com_example_myapplication_MainAct<span style="letter-spacing:-5px">···</span></div>
<div style="position:absolute;left:45px;top:592px;width:30px;height:26px;background:#efefef;border-left:1.5px solid #262626;border-right:1.5px solid #262626"></div>
<div style="position:absolute;left:45px;top:592px;width:30px;height:3px;background:#10d0ff"></div>
<div style="position:absolute;left:46px;top:595px;width:28px;height:1px;background:#3a5a64"></div>
<div class="ns" style="position:absolute;left:81px;top:599px;">Java_com_example_myapplication_MainAct<span style="letter-spacing:-5px">···</span></div>
<div style="position:absolute;left:45px;top:618px;width:30px;height:26px;background:#efefef;border-left:1.5px solid #262626;border-right:1.5px solid #262626"></div>
<div style="position:absolute;left:45px;top:618px;width:30px;height:3px;background:#10d0ff"></div>
<div style="position:absolute;left:46px;top:621px;width:28px;height:1px;background:#3a5a64"></div>
<div class="ns" style="position:absolute;left:81px;top:625px;">sub_1B10</div>
<div style="position:absolute;left:41px;top:644px;width:537px;height:26px;background:#ffe6ff"></div>
<div style="position:absolute;left:45px;top:644px;width:30px;height:26px;background:#efefef;border-left:1.5px solid #262626;border-right:1.5px solid #262626"></div>
<div style="position:absolute;left:45px;top:644px;width:30px;height:3px;background:#10d0ff"></div>
<div style="position:absolute;left:46px;top:647px;width:28px;height:1px;background:#3a5a64"></div>
<div class="ns" style="position:absolute;left:81px;top:651px;text-shadow:1px 0 0 #000;letter-spacing:-0.2px;">.__cxa_finalize</div>
<div style="position:absolute;left:41px;top:670px;width:537px;height:26px;background:#ffe6ff"></div>
<div style="position:absolute;left:45px;top:670px;width:30px;height:26px;background:#efefef;border-left:1.5px solid #262626;border-right:1.5px solid #262626"></div>
<div style="position:absolute;left:45px;top:670px;width:30px;height:3px;background:#10d0ff"></div>
<div style="position:absolute;left:46px;top:673px;width:28px;height:1px;background:#3a5a64"></div>
<div class="ns" style="position:absolute;left:81px;top:677px;text-shadow:1px 0 0 #000;letter-spacing:-0.2px;">.__cxa_atexit</div>
<div style="position:absolute;left:41px;top:696px;width:537px;height:26px;background:#ffe6ff"></div>
<div style="position:absolute;left:45px;top:696px;width:30px;height:26px;background:#efefef;border-left:1.5px solid #262626;border-right:1.5px solid #262626"></div>
<div style="position:absolute;left:45px;top:696px;width:30px;height:3px;background:#10d0ff"></div>
<div style="position:absolute;left:46px;top:699px;width:28px;height:1px;background:#3a5a64"></div>
<div class="ns" style="position:absolute;left:81px;top:703px;">.__register_atfork</div>
<div style="position:absolute;left:41px;top:722px;width:537px;height:26px;background:#ffe6ff"></div>
<div style="position:absolute;left:45px;top:722px;width:30px;height:26px;background:#efefef;border-left:1.5px solid #262626;border-right:1.5px solid #262626"></div>
<div style="position:absolute;left:45px;top:722px;width:30px;height:3px;background:#10d0ff"></div>
<div style="position:absolute;left:46px;top:725px;width:28px;height:1px;background:#3a5a64"></div>
<div class="ns" style="position:absolute;left:81px;top:729px;">.__memcpy_chk</div>
<div style="position:absolute;left:41px;top:748px;width:537px;height:26px;background:#ffe6ff"></div>
<div style="position:absolute;left:45px;top:748px;width:30px;height:26px;background:#efefef;border-left:1.5px solid #262626;border-right:1.5px solid #262626"></div>
<div style="position:absolute;left:45px;top:748px;width:30px;height:3px;background:#10d0ff"></div>
<div style="position:absolute;left:46px;top:751px;width:28px;height:1px;background:#3a5a64"></div>
<div class="ns" style="position:absolute;left:81px;top:755px;">.__stack_chk_fail</div>
<div style="position:absolute;left:41px;top:774px;width:537px;height:26px;background:#ffe6ff"></div>
<div style="position:absolute;left:45px;top:774px;width:30px;height:26px;background:#efefef;border-left:1.5px solid #262626;border-right:1.5px solid #262626"></div>
<div style="position:absolute;left:45px;top:774px;width:30px;height:3px;background:#10d0ff"></div>
<div style="position:absolute;left:46px;top:777px;width:28px;height:1px;background:#3a5a64"></div>
<div class="ns" style="position:absolute;left:81px;top:781px;text-shadow:1px 0 0 #000;letter-spacing:-0.2px;">.AAssetManager_fromJava</div>
<div style="position:absolute;left:41px;top:800px;width:537px;height:26px;background:#ffe6ff"></div>
<div style="position:absolute;left:45px;top:800px;width:30px;height:26px;background:#efefef;border-left:1.5px solid #262626;border-right:1.5px solid #262626"></div>
<div style="position:absolute;left:45px;top:800px;width:30px;height:3px;background:#10d0ff"></div>
<div style="position:absolute;left:46px;top:803px;width:28px;height:1px;background:#3a5a64"></div>
<div class="ns" style="position:absolute;left:81px;top:807px;text-shadow:1px 0 0 #000;letter-spacing:-0.2px;">.AAssetManager_open</div>
<div style="position:absolute;left:41px;top:826px;width:537px;height:26px;background:#ffe6ff"></div>
<div style="position:absolute;left:45px;top:826px;width:30px;height:26px;background:#efefef;border-left:1.5px solid #262626;border-right:1.5px solid #262626"></div>
<div style="position:absolute;left:45px;top:826px;width:30px;height:3px;background:#10d0ff"></div>
<div style="position:absolute;left:46px;top:829px;width:28px;height:1px;background:#3a5a64"></div>
<div class="ns" style="position:absolute;left:81px;top:833px;text-shadow:1px 0 0 #000;letter-spacing:-0.2px;">.AAsset_getLength</div>
<div style="position:absolute;left:41px;top:852px;width:537px;height:26px;background:#ffe6ff"></div>
<div style="position:absolute;left:45px;top:852px;width:30px;height:26px;background:#efefef;border-left:1.5px solid #262626;border-right:1.5px solid #262626"></div>
<div style="position:absolute;left:45px;top:852px;width:30px;height:3px;background:#10d0ff"></div>
<div style="position:absolute;left:46px;top:855px;width:28px;height:1px;background:#3a5a64"></div>
<div class="ns" style="position:absolute;left:81px;top:859px;text-shadow:1px 0 0 #000;letter-spacing:-0.2px;">.AAsset_getBuffer</div>
<div style="position:absolute;left:41px;top:878px;width:537px;height:26px;background:#ffe6ff"></div>
<div style="position:absolute;left:45px;top:878px;width:30px;height:26px;background:#efefef;border-left:1.5px solid #262626;border-right:1.5px solid #262626"></div>
<div style="position:absolute;left:45px;top:878px;width:30px;height:3px;background:#10d0ff"></div>
<div style="position:absolute;left:46px;top:881px;width:28px;height:1px;background:#3a5a64"></div>
<div class="ns" style="position:absolute;left:81px;top:885px;text-shadow:1px 0 0 #000;letter-spacing:-0.2px;">.malloc</div>
<div style="position:absolute;left:41px;top:904px;width:537px;height:26px;background:#ffe6ff"></div>
<div style="position:absolute;left:45px;top:904px;width:30px;height:26px;background:#efefef;border-left:1.5px solid #262626;border-right:1.5px solid #262626"></div>
<div style="position:absolute;left:45px;top:904px;width:30px;height:3px;background:#10d0ff"></div>
<div style="position:absolute;left:46px;top:907px;width:28px;height:1px;background:#3a5a64"></div>
<div class="ns" style="position:absolute;left:81px;top:911px;text-shadow:1px 0 0 #000;letter-spacing:-0.2px;">.AAsset_close</div>
<div style="position:absolute;left:41px;top:930px;width:537px;height:26px;background:#ffe6ff"></div>
<div style="position:absolute;left:45px;top:930px;width:30px;height:26px;background:#efefef;border-left:1.5px solid #262626;border-right:1.5px solid #262626"></div>
<div style="position:absolute;left:45px;top:930px;width:30px;height:3px;background:#10d0ff"></div>
<div style="position:absolute;left:46px;top:933px;width:28px;height:1px;background:#3a5a64"></div>
<div class="ns" style="position:absolute;left:81px;top:937px;text-shadow:1px 0 0 #000;letter-spacing:-0.2px;">.free</div>
<div style="position:absolute;left:41px;top:956px;width:537px;height:26px;background:#ffe6ff"></div>
<div style="position:absolute;left:45px;top:956px;width:30px;height:26px;background:#efefef;border-left:1.5px solid #262626;border-right:1.5px solid #262626"></div>
<div style="position:absolute;left:45px;top:956px;width:30px;height:3px;background:#10d0ff"></div>
<div style="position:absolute;left:46px;top:959px;width:28px;height:1px;background:#3a5a64"></div>
<div class="ns" style="position:absolute;left:81px;top:963px;text-shadow:1px 0 0 #000;letter-spacing:-0.2px;">.getpid</div>
<div style="position:absolute;left:41px;top:982px;width:537px;height:26px;background:#ffe6ff"></div>
<div style="position:absolute;left:45px;top:982px;width:30px;height:26px;background:#efefef;border-left:1.5px solid #262626;border-right:1.5px solid #262626"></div>
<div style="position:absolute;left:45px;top:982px;width:30px;height:3px;background:#10d0ff"></div>
<div style="position:absolute;left:46px;top:985px;width:28px;height:1px;background:#3a5a64"></div>
<div class="ns" style="position:absolute;left:81px;top:989px;text-shadow:1px 0 0 #000;letter-spacing:-0.2px;">.fopen</div>
<div style="position:absolute;left:41px;top:1008px;width:537px;height:26px;background:#ffe6ff"></div>
<div style="position:absolute;left:45px;top:1008px;width:30px;height:26px;background:#efefef;border-left:1.5px solid #262626;border-right:1.5px solid #262626"></div>
<div style="position:absolute;left:45px;top:1008px;width:30px;height:3px;background:#10d0ff"></div>
<div style="position:absolute;left:46px;top:1011px;width:28px;height:1px;background:#3a5a64"></div>
<div class="ns" style="position:absolute;left:81px;top:1015px;text-shadow:1px 0 0 #000;letter-spacing:-0.2px;">.fwrite</div>
<div style="position:absolute;left:41px;top:1034px;width:537px;height:26px;background:#ffe6ff"></div>
<div style="position:absolute;left:45px;top:1034px;width:30px;height:26px;background:#efefef;border-left:1.5px solid #262626;border-right:1.5px solid #262626"></div>
<div style="position:absolute;left:45px;top:1034px;width:30px;height:3px;background:#10d0ff"></div>
<div style="position:absolute;left:46px;top:1037px;width:28px;height:1px;background:#3a5a64"></div>
<div class="ns" style="position:absolute;left:81px;top:1041px;text-shadow:1px 0 0 #000;letter-spacing:-0.2px;">.fclose</div>
<div style="position:absolute;left:41px;top:1060px;width:537px;height:26px;background:#ffe6ff"></div>
<div style="position:absolute;left:45px;top:1060px;width:30px;height:26px;background:#efefef;border-left:1.5px solid #262626;border-right:1.5px solid #262626"></div>
<div style="position:absolute;left:45px;top:1060px;width:30px;height:3px;background:#10d0ff"></div>
<div style="position:absolute;left:46px;top:1063px;width:28px;height:1px;background:#3a5a64"></div>
<div class="ns" style="position:absolute;left:81px;top:1067px;text-shadow:1px 0 0 #000;letter-spacing:-0.2px;">.chmod</div>
<div style="position:absolute;left:41px;top:1086px;width:537px;height:26px;background:#ffe6ff"></div>
<div style="position:absolute;left:45px;top:1086px;width:30px;height:26px;background:#efefef;border-left:1.5px solid #262626;border-right:1.5px solid #262626"></div>
<div style="position:absolute;left:45px;top:1086px;width:30px;height:3px;background:#10d0ff"></div>
<div style="position:absolute;left:46px;top:1089px;width:28px;height:1px;background:#3a5a64"></div>
<div class="ns" style="position:absolute;left:81px;top:1093px;text-shadow:1px 0 0 #000;letter-spacing:-0.2px;">.dlopen</div>
<div style="position:absolute;left:41px;top:1112px;width:537px;height:28px;background:#ffe6ff"></div>
<div style="position:absolute;left:45px;top:1112px;width:30px;height:26px;background:#efefef;border-left:1.5px solid #262626;border-right:1.5px solid #262626"></div>
<div style="position:absolute;left:45px;top:1112px;width:30px;height:3px;background:#10d0ff"></div>
<div style="position:absolute;left:46px;top:1115px;width:28px;height:1px;background:#3a5a64"></div>
<div class="ns" style="position:absolute;left:81px;top:1119px;text-shadow:1px 0 0 #000;letter-spacing:-0.2px;">.dlsym</div>
<svg style="left:45px;top:280px" width="30" height="870" viewBox="45 280 30 870"><g transform="translate(0,280)"><path d="M66.3 8.3 Q64.5 6.3 62.3 8.6 Q61.2 10 60.6 12.5 L58.3 21.5 Q57.5 24.2 55.2 23.6" fill="none" stroke="#1c1c1c" stroke-width="2.6" stroke-linecap="round"/><path d="M57.3 12.6 H64.3" stroke="#1c1c1c" stroke-width="2.2"/><circle cx="65.6" cy="8.6" r="1.6" fill="#1c1c1c"/><circle cx="55.4" cy="23.2" r="1.6" fill="#1c1c1c"/></g><g transform="translate(0,306)"><path d="M66.3 8.3 Q64.5 6.3 62.3 8.6 Q61.2 10 60.6 12.5 L58.3 21.5 Q57.5 24.2 55.2 23.6" fill="none" stroke="#1c1c1c" stroke-width="2.6" stroke-linecap="round"/><path d="M57.3 12.6 H64.3" stroke="#1c1c1c" stroke-width="2.2"/><circle cx="65.6" cy="8.6" r="1.6" fill="#1c1c1c"/><circle cx="55.4" cy="23.2" r="1.6" fill="#1c1c1c"/></g><g transform="translate(0,332)"><path d="M66.3 8.3 Q64.5 6.3 62.3 8.6 Q61.2 10 60.6 12.5 L58.3 21.5 Q57.5 24.2 55.2 23.6" fill="none" stroke="#1c1c1c" stroke-width="2.6" stroke-linecap="round"/><path d="M57.3 12.6 H64.3" stroke="#1c1c1c" stroke-width="2.2"/><circle cx="65.6" cy="8.6" r="1.6" fill="#1c1c1c"/><circle cx="55.4" cy="23.2" r="1.6" fill="#1c1c1c"/></g><g transform="translate(0,358)"><path d="M66.3 8.3 Q64.5 6.3 62.3 8.6 Q61.2 10 60.6 12.5 L58.3 21.5 Q57.5 24.2 55.2 23.6" fill="none" stroke="#1c1c1c" stroke-width="2.6" stroke-linecap="round"/><path d="M57.3 12.6 H64.3" stroke="#1c1c1c" stroke-width="2.2"/><circle cx="65.6" cy="8.6" r="1.6" fill="#1c1c1c"/><circle cx="55.4" cy="23.2" r="1.6" fill="#1c1c1c"/></g><g transform="translate(0,384)"><path d="M66.3 8.3 Q64.5 6.3 62.3 8.6 Q61.2 10 60.6 12.5 L58.3 21.5 Q57.5 24.2 55.2 23.6" fill="none" stroke="#1c1c1c" stroke-width="2.6" stroke-linecap="round"/><path d="M57.3 12.6 H64.3" stroke="#1c1c1c" stroke-width="2.2"/><circle cx="65.6" cy="8.6" r="1.6" fill="#1c1c1c"/><circle cx="55.4" cy="23.2" r="1.6" fill="#1c1c1c"/></g><g transform="translate(0,410)"><path d="M66.3 8.3 Q64.5 6.3 62.3 8.6 Q61.2 10 60.6 12.5 L58.3 21.5 Q57.5 24.2 55.2 23.6" fill="none" stroke="#1c1c1c" stroke-width="2.6" stroke-linecap="round"/><path d="M57.3 12.6 H64.3" stroke="#1c1c1c" stroke-width="2.2"/><circle cx="65.6" cy="8.6" r="1.6" fill="#1c1c1c"/><circle cx="55.4" cy="23.2" r="1.6" fill="#1c1c1c"/></g><g transform="translate(0,436)"><path d="M66.3 8.3 Q64.5 6.3 62.3 8.6 Q61.2 10 60.6 12.5 L58.3 21.5 Q57.5 24.2 55.2 23.6" fill="none" stroke="#1c1c1c" stroke-width="2.6" stroke-linecap="round"/><path d="M57.3 12.6 H64.3" stroke="#1c1c1c" stroke-width="2.2"/><circle cx="65.6" cy="8.6" r="1.6" fill="#1c1c1c"/><circle cx="55.4" cy="23.2" r="1.6" fill="#1c1c1c"/></g><g transform="translate(0,462)"><path d="M66.3 8.3 Q64.5 6.3 62.3 8.6 Q61.2 10 60.6 12.5 L58.3 21.5 Q57.5 24.2 55.2 23.6" fill="none" stroke="#1c1c1c" stroke-width="2.6" stroke-linecap="round"/><path d="M57.3 12.6 H64.3" stroke="#1c1c1c" stroke-width="2.2"/><circle cx="65.6" cy="8.6" r="1.6" fill="#1c1c1c"/><circle cx="55.4" cy="23.2" r="1.6" fill="#1c1c1c"/></g><g transform="translate(0,488)"><path d="M66.3 8.3 Q64.5 6.3 62.3 8.6 Q61.2 10 60.6 12.5 L58.3 21.5 Q57.5 24.2 55.2 23.6" fill="none" stroke="#1c1c1c" stroke-width="2.6" stroke-linecap="round"/><path d="M57.3 12.6 H64.3" stroke="#1c1c1c" stroke-width="2.2"/><circle cx="65.6" cy="8.6" r="1.6" fill="#1c1c1c"/><circle cx="55.4" cy="23.2" r="1.6" fill="#1c1c1c"/></g><g transform="translate(0,514)"><path d="M66.3 8.3 Q64.5 6.3 62.3 8.6 Q61.2 10 60.6 12.5 L58.3 21.5 Q57.5 24.2 55.2 23.6" fill="none" stroke="#1c1c1c" stroke-width="2.6" stroke-linecap="round"/><path d="M57.3 12.6 H64.3" stroke="#1c1c1c" stroke-width="2.2"/><circle cx="65.6" cy="8.6" r="1.6" fill="#1c1c1c"/><circle cx="55.4" cy="23.2" r="1.6" fill="#1c1c1c"/></g><g transform="translate(0,540)"><path d="M66.3 8.3 Q64.5 6.3 62.3 8.6 Q61.2 10 60.6 12.5 L58.3 21.5 Q57.5 24.2 55.2 23.6" fill="none" stroke="#1c1c1c" stroke-width="2.6" stroke-linecap="round"/><path d="M57.3 12.6 H64.3" stroke="#1c1c1c" stroke-width="2.2"/><circle cx="65.6" cy="8.6" r="1.6" fill="#1c1c1c"/><circle cx="55.4" cy="23.2" r="1.6" fill="#1c1c1c"/></g><g transform="translate(0,566)"><path d="M66.3 8.3 Q64.5 6.3 62.3 8.6 Q61.2 10 60.6 12.5 L58.3 21.5 Q57.5 24.2 55.2 23.6" fill="none" stroke="#1c1c1c" stroke-width="2.6" stroke-linecap="round"/><path d="M57.3 12.6 H64.3" stroke="#1c1c1c" stroke-width="2.2"/><circle cx="65.6" cy="8.6" r="1.6" fill="#1c1c1c"/><circle cx="55.4" cy="23.2" r="1.6" fill="#1c1c1c"/></g><g transform="translate(0,592)"><path d="M66.3 8.3 Q64.5 6.3 62.3 8.6 Q61.2 10 60.6 12.5 L58.3 21.5 Q57.5 24.2 55.2 23.6" fill="none" stroke="#1c1c1c" stroke-width="2.6" stroke-linecap="round"/><path d="M57.3 12.6 H64.3" stroke="#1c1c1c" stroke-width="2.2"/><circle cx="65.6" cy="8.6" r="1.6" fill="#1c1c1c"/><circle cx="55.4" cy="23.2" r="1.6" fill="#1c1c1c"/></g><g transform="translate(0,618)"><path d="M66.3 8.3 Q64.5 6.3 62.3 8.6 Q61.2 10 60.6 12.5 L58.3 21.5 Q57.5 24.2 55.2 23.6" fill="none" stroke="#1c1c1c" stroke-width="2.6" stroke-linecap="round"/><path d="M57.3 12.6 H64.3" stroke="#1c1c1c" stroke-width="2.2"/><circle cx="65.6" cy="8.6" r="1.6" fill="#1c1c1c"/><circle cx="55.4" cy="23.2" r="1.6" fill="#1c1c1c"/></g><g transform="translate(0,644)"><path d="M66.3 8.3 Q64.5 6.3 62.3 8.6 Q61.2 10 60.6 12.5 L58.3 21.5 Q57.5 24.2 55.2 23.6" fill="none" stroke="#1c1c1c" stroke-width="2.6" stroke-linecap="round"/><path d="M57.3 12.6 H64.3" stroke="#1c1c1c" stroke-width="2.2"/><circle cx="65.6" cy="8.6" r="1.6" fill="#1c1c1c"/><circle cx="55.4" cy="23.2" r="1.6" fill="#1c1c1c"/></g><g transform="translate(0,670)"><path d="M66.3 8.3 Q64.5 6.3 62.3 8.6 Q61.2 10 60.6 12.5 L58.3 21.5 Q57.5 24.2 55.2 23.6" fill="none" stroke="#1c1c1c" stroke-width="2.6" stroke-linecap="round"/><path d="M57.3 12.6 H64.3" stroke="#1c1c1c" stroke-width="2.2"/><circle cx="65.6" cy="8.6" r="1.6" fill="#1c1c1c"/><circle cx="55.4" cy="23.2" r="1.6" fill="#1c1c1c"/></g><g transform="translate(0,696)"><path d="M66.3 8.3 Q64.5 6.3 62.3 8.6 Q61.2 10 60.6 12.5 L58.3 21.5 Q57.5 24.2 55.2 23.6" fill="none" stroke="#1c1c1c" stroke-width="2.6" stroke-linecap="round"/><path d="M57.3 12.6 H64.3" stroke="#1c1c1c" stroke-width="2.2"/><circle cx="65.6" cy="8.6" r="1.6" fill="#1c1c1c"/><circle cx="55.4" cy="23.2" r="1.6" fill="#1c1c1c"/></g><g transform="translate(0,722)"><path d="M66.3 8.3 Q64.5 6.3 62.3 8.6 Q61.2 10 60.6 12.5 L58.3 21.5 Q57.5 24.2 55.2 23.6" fill="none" stroke="#1c1c1c" stroke-width="2.6" stroke-linecap="round"/><path d="M57.3 12.6 H64.3" stroke="#1c1c1c" stroke-width="2.2"/><circle cx="65.6" cy="8.6" r="1.6" fill="#1c1c1c"/><circle cx="55.4" cy="23.2" r="1.6" fill="#1c1c1c"/></g><g transform="translate(0,748)"><path d="M66.3 8.3 Q64.5 6.3 62.3 8.6 Q61.2 10 60.6 12.5 L58.3 21.5 Q57.5 24.2 55.2 23.6" fill="none" stroke="#1c1c1c" stroke-width="2.6" stroke-linecap="round"/><path d="M57.3 12.6 H64.3" stroke="#1c1c1c" stroke-width="2.2"/><circle cx="65.6" cy="8.6" r="1.6" fill="#1c1c1c"/><circle cx="55.4" cy="23.2" r="1.6" fill="#1c1c1c"/></g><g transform="translate(0,774)"><path d="M66.3 8.3 Q64.5 6.3 62.3 8.6 Q61.2 10 60.6 12.5 L58.3 21.5 Q57.5 24.2 55.2 23.6" fill="none" stroke="#1c1c1c" stroke-width="2.6" stroke-linecap="round"/><path d="M57.3 12.6 H64.3" stroke="#1c1c1c" stroke-width="2.2"/><circle cx="65.6" cy="8.6" r="1.6" fill="#1c1c1c"/><circle cx="55.4" cy="23.2" r="1.6" fill="#1c1c1c"/></g><g transform="translate(0,800)"><path d="M66.3 8.3 Q64.5 6.3 62.3 8.6 Q61.2 10 60.6 12.5 L58.3 21.5 Q57.5 24.2 55.2 23.6" fill="none" stroke="#1c1c1c" stroke-width="2.6" stroke-linecap="round"/><path d="M57.3 12.6 H64.3" stroke="#1c1c1c" stroke-width="2.2"/><circle cx="65.6" cy="8.6" r="1.6" fill="#1c1c1c"/><circle cx="55.4" cy="23.2" r="1.6" fill="#1c1c1c"/></g><g transform="translate(0,826)"><path d="M66.3 8.3 Q64.5 6.3 62.3 8.6 Q61.2 10 60.6 12.5 L58.3 21.5 Q57.5 24.2 55.2 23.6" fill="none" stroke="#1c1c1c" stroke-width="2.6" stroke-linecap="round"/><path d="M57.3 12.6 H64.3" stroke="#1c1c1c" stroke-width="2.2"/><circle cx="65.6" cy="8.6" r="1.6" fill="#1c1c1c"/><circle cx="55.4" cy="23.2" r="1.6" fill="#1c1c1c"/></g><g transform="translate(0,852)"><path d="M66.3 8.3 Q64.5 6.3 62.3 8.6 Q61.2 10 60.6 12.5 L58.3 21.5 Q57.5 24.2 55.2 23.6" fill="none" stroke="#1c1c1c" stroke-width="2.6" stroke-linecap="round"/><path d="M57.3 12.6 H64.3" stroke="#1c1c1c" stroke-width="2.2"/><circle cx="65.6" cy="8.6" r="1.6" fill="#1c1c1c"/><circle cx="55.4" cy="23.2" r="1.6" fill="#1c1c1c"/></g><g transform="translate(0,878)"><path d="M66.3 8.3 Q64.5 6.3 62.3 8.6 Q61.2 10 60.6 12.5 L58.3 21.5 Q57.5 24.2 55.2 23.6" fill="none" stroke="#1c1c1c" stroke-width="2.6" stroke-linecap="round"/><path d="M57.3 12.6 H64.3" stroke="#1c1c1c" stroke-width="2.2"/><circle cx="65.6" cy="8.6" r="1.6" fill="#1c1c1c"/><circle cx="55.4" cy="23.2" r="1.6" fill="#1c1c1c"/></g><g transform="translate(0,904)"><path d="M66.3 8.3 Q64.5 6.3 62.3 8.6 Q61.2 10 60.6 12.5 L58.3 21.5 Q57.5 24.2 55.2 23.6" fill="none" stroke="#1c1c1c" stroke-width="2.6" stroke-linecap="round"/><path d="M57.3 12.6 H64.3" stroke="#1c1c1c" stroke-width="2.2"/><circle cx="65.6" cy="8.6" r="1.6" fill="#1c1c1c"/><circle cx="55.4" cy="23.2" r="1.6" fill="#1c1c1c"/></g><g transform="translate(0,930)"><path d="M66.3 8.3 Q64.5 6.3 62.3 8.6 Q61.2 10 60.6 12.5 L58.3 21.5 Q57.5 24.2 55.2 23.6" fill="none" stroke="#1c1c1c" stroke-width="2.6" stroke-linecap="round"/><path d="M57.3 12.6 H64.3" stroke="#1c1c1c" stroke-width="2.2"/><circle cx="65.6" cy="8.6" r="1.6" fill="#1c1c1c"/><circle cx="55.4" cy="23.2" r="1.6" fill="#1c1c1c"/></g><g transform="translate(0,956)"><path d="M66.3 8.3 Q64.5 6.3 62.3 8.6 Q61.2 10 60.6 12.5 L58.3 21.5 Q57.5 24.2 55.2 23.6" fill="none" stroke="#1c1c1c" stroke-width="2.6" stroke-linecap="round"/><path d="M57.3 12.6 H64.3" stroke="#1c1c1c" stroke-width="2.2"/><circle cx="65.6" cy="8.6" r="1.6" fill="#1c1c1c"/><circle cx="55.4" cy="23.2" r="1.6" fill="#1c1c1c"/></g><g transform="translate(0,982)"><path d="M66.3 8.3 Q64.5 6.3 62.3 8.6 Q61.2 10 60.6 12.5 L58.3 21.5 Q57.5 24.2 55.2 23.6" fill="none" stroke="#1c1c1c" stroke-width="2.6" stroke-linecap="round"/><path d="M57.3 12.6 H64.3" stroke="#1c1c1c" stroke-width="2.2"/><circle cx="65.6" cy="8.6" r="1.6" fill="#1c1c1c"/><circle cx="55.4" cy="23.2" r="1.6" fill="#1c1c1c"/></g><g transform="translate(0,1008)"><path d="M66.3 8.3 Q64.5 6.3 62.3 8.6 Q61.2 10 60.6 12.5 L58.3 21.5 Q57.5 24.2 55.2 23.6" fill="none" stroke="#1c1c1c" stroke-width="2.6" stroke-linecap="round"/><path d="M57.3 12.6 H64.3" stroke="#1c1c1c" stroke-width="2.2"/><circle cx="65.6" cy="8.6" r="1.6" fill="#1c1c1c"/><circle cx="55.4" cy="23.2" r="1.6" fill="#1c1c1c"/></g><g transform="translate(0,1034)"><path d="M66.3 8.3 Q64.5 6.3 62.3 8.6 Q61.2 10 60.6 12.5 L58.3 21.5 Q57.5 24.2 55.2 23.6" fill="none" stroke="#1c1c1c" stroke-width="2.6" stroke-linecap="round"/><path d="M57.3 12.6 H64.3" stroke="#1c1c1c" stroke-width="2.2"/><circle cx="65.6" cy="8.6" r="1.6" fill="#1c1c1c"/><circle cx="55.4" cy="23.2" r="1.6" fill="#1c1c1c"/></g><g transform="translate(0,1060)"><path d="M66.3 8.3 Q64.5 6.3 62.3 8.6 Q61.2 10 60.6 12.5 L58.3 21.5 Q57.5 24.2 55.2 23.6" fill="none" stroke="#1c1c1c" stroke-width="2.6" stroke-linecap="round"/><path d="M57.3 12.6 H64.3" stroke="#1c1c1c" stroke-width="2.2"/><circle cx="65.6" cy="8.6" r="1.6" fill="#1c1c1c"/><circle cx="55.4" cy="23.2" r="1.6" fill="#1c1c1c"/></g><g transform="translate(0,1086)"><path d="M66.3 8.3 Q64.5 6.3 62.3 8.6 Q61.2 10 60.6 12.5 L58.3 21.5 Q57.5 24.2 55.2 23.6" fill="none" stroke="#1c1c1c" stroke-width="2.6" stroke-linecap="round"/><path d="M57.3 12.6 H64.3" stroke="#1c1c1c" stroke-width="2.2"/><circle cx="65.6" cy="8.6" r="1.6" fill="#1c1c1c"/><circle cx="55.4" cy="23.2" r="1.6" fill="#1c1c1c"/></g><g transform="translate(0,1112)"><path d="M66.3 8.3 Q64.5 6.3 62.3 8.6 Q61.2 10 60.6 12.5 L58.3 21.5 Q57.5 24.2 55.2 23.6" fill="none" stroke="#1c1c1c" stroke-width="2.6" stroke-linecap="round"/><path d="M57.3 12.6 H64.3" stroke="#1c1c1c" stroke-width="2.2"/><circle cx="65.6" cy="8.6" r="1.6" fill="#1c1c1c"/><circle cx="55.4" cy="23.2" r="1.6" fill="#1c1c1c"/></g></svg>
<div style="position:absolute;left:45px;top:1138px;width:30px;height:3px;background:#10d0ff"></div>
<div class="sans" style="position:absolute;left:6px;top:1184px;font-size:25px;letter-spacing:0.13px;color:#000">Line 10 of 58, /sub_1838</div>
<div style="position:absolute;left:0px;top:1217px;width:613px;height:34px;background:#f0f0f0;border:1px solid #8a929a;box-shadow:inset 0 1px 0 #fff"></div>
<svg style="left:6px;top:1225px" width="13" height="17" viewBox="0 0 13 17"><g fill="none" stroke="#666" stroke-width="1"><rect x="4.5" y="0.5" width="4" height="4"/><path d="M6.5 4.5 V7 M2 7 H11 M2 7 V10 M6.5 7 V10 M11 7 V10"/><rect x="0.5" y="10.5" width="3" height="6"/><rect x="5" y="10.5" width="3" height="6"/><rect x="9.5" y="10.5" width="3" height="6"/></g></svg>
<div class="ns" style="position:absolute;left:32px;top:1226px;">Graph overview</div>
<svg style="left:525px;top:1225px" width="84" height="22" viewBox="0 0 84 22"><g fill="none" stroke="#333" stroke-width="2"><rect x="1" y="1" width="18" height="18"/><rect x="41" y="1" width="10" height="10"/><rect x="37" y="7" width="10" height="10" fill="#f0f0f0"/><path d="M67.5 3 L80.5 16 M80.5 3 L67.5 16" stroke-width="3"/></g><rect x="1" y="1" width="18" height="5" fill="#333"/><rect x="41" y="1" width="10" height="3" fill="#333"/><rect x="37" y="7" width="10" height="3" fill="#333"/></svg>
<div style="position:absolute;left:0px;top:1252px;width:613px;height:218px;background:linear-gradient(#a8a8a8,#90a0a8)"></div>
<div style="position:absolute;left:0px;top:1252px;width:613px;height:1px;background:#fff"></div>
<svg style="left:0;top:1252px" width="613" height="218" viewBox="0 1252 613 218"><g fill="none" stroke-width="1"><path d="M312 1289.3 H344 V1451 H322.4 M312 1296.9 H344" stroke="#2d7a2d"/><path d="M292.5 1303.4 V1434.3" stroke="#3a8a3a" stroke-width="1.5"/><path d="M330.8 1320.7 V1389.4 H276 V1434.3" stroke="#3a8a3a"/><path d="M301.9 1339 H275.5 V1434.3" stroke="#c04040"/><path d="M312 1338.5 V1389" stroke="#2d7a2d"/><path d="M297.4 1405.7 H326 M297.4 1405.7 V1434.3" stroke="#3a8a3a"/><path d="M276 1441.6 H310 M293 1447.7 V1450.5 H305" stroke="#3030c0"/><path d="M321 1434.3 V1442.5" stroke="#c04040"/></g><rect x="260" y="1307" width="87" height="43" fill="#f4fbff" opacity="0.93"/><rect x="285" y="1253" width="37.60000000000002" height="35.299999999999955" fill="#a4a4a4" stroke="#4a4a4a" stroke-width="1"/><rect x="292.5" y="1289.3" width="19.80000000000001" height="7.400000000000091" fill="#a4a4a4" stroke="#4a4a4a" stroke-width="1"/><rect x="291.5" y="1297.4" width="17.80000000000001" height="6.0" fill="#a4a4a4" stroke="#4a4a4a" stroke-width="1"/><rect x="295.2" y="1350.4" width="15.600000000000023" height="4.099999999999909" fill="#a4a4a4" stroke="#4a4a4a" stroke-width="1"/><rect x="296.3" y="1355.2" width="12.300000000000011" height="2.599999999999909" fill="#a4a4a4" stroke="#4a4a4a" stroke-width="1"/><rect x="293.4" y="1358.7" width="16.200000000000045" height="6.599999999999909" fill="#a4a4a4" stroke="#4a4a4a" stroke-width="1"/><rect x="293.4" y="1366.4" width="14.900000000000034" height="3.099999999999909" fill="#a4a4a4" stroke="#4a4a4a" stroke-width="1"/><rect x="297.4" y="1370.5" width="13.100000000000023" height="4.7999999999999545" fill="#a4a4a4" stroke="#4a4a4a" stroke-width="1"/><rect x="292.7" y="1376.3" width="18.80000000000001" height="11.900000000000091" fill="#a4a4a4" stroke="#4a4a4a" stroke-width="1"/><rect x="304.1" y="1390.1" width="16.299999999999955" height="15.300000000000182" fill="#a4a4a4" stroke="#4a4a4a" stroke-width="1"/><rect x="304.1" y="1407.2" width="22.299999999999955" height="11.099999999999909" fill="#a4a4a4" stroke="#4a4a4a" stroke-width="1"/><rect x="298.6" y="1419.5" width="43.599999999999966" height="6.599999999999909" fill="#a4a4a4" stroke="#4a4a4a" stroke-width="1"/><rect x="298.6" y="1427.2" width="21.799999999999955" height="6.399999999999864" fill="#a4a4a4" stroke="#4a4a4a" stroke-width="1"/><rect x="268.2" y="1434.3" width="15.199999999999989" height="7.0" fill="#a4a4a4" stroke="#4a4a4a" stroke-width="1"/><rect x="284.1" y="1434.3" width="17.0" height="6.7000000000000455" fill="#a4a4a4" stroke="#4a4a4a" stroke-width="1"/><rect x="301.9" y="1434.3" width="15.600000000000023" height="7.0" fill="#a4a4a4" stroke="#4a4a4a" stroke-width="1"/><rect x="286.3" y="1442.5" width="12.599999999999966" height="5.2000000000000455" fill="#a4a4a4" stroke="#4a4a4a" stroke-width="1"/><rect x="299.7" y="1442.5" width="22.69999999999999" height="7.900000000000091" fill="#a4a4a4" stroke="#4a4a4a" stroke-width="1"/><rect x="296.4" y="1451.6" width="17.100000000000023" height="7.900000000000091" fill="#a4a4a4" stroke="#4a4a4a" stroke-width="1"/><rect x="282.3" y="1460.2" width="23.69999999999999" height="8.299999999999955" fill="#a4a4a4" stroke="#4a4a4a" stroke-width="1"/><rect x="306.3" y="1460.2" width="19.30000000000001" height="8.299999999999955" fill="#a4a4a4" stroke="#4a4a4a" stroke-width="1"/><rect x="300.4" y="1304.6" width="14.800000000000011" height="4.0" fill="#fff" stroke="#4a4a4a" stroke-width="1"/><rect x="313.75" y="1309.3" width="17.75" height="5.2000000000000455" fill="#fff" stroke="#4a4a4a" stroke-width="1"/><rect x="313.75" y="1315.2" width="16.75" height="5.5" fill="#fff" stroke="#4a4a4a" stroke-width="1"/><rect x="292.7" y="1321.6" width="19.900000000000034" height="16.90000000000009" fill="#a0d0d0" stroke="#4a4a4a" stroke-width="1"/><rect x="294.2" y="1340.4" width="16.600000000000023" height="8.199999999999818" fill="#fff" stroke="#4a4a4a" stroke-width="1"/><path d="M0 1328.5 H260 M347 1328.5 H613 M303.5 1252 V1470" stroke="#ffff00" stroke-width="1.5"/></svg>
<div style="position:absolute;left:0px;top:1470px;width:613px;height:4px;background:#f0f0f0"></div>
<div style="position:absolute;left:617px;top:235px;width:2454px;height:1px;background:#a8a8a8"></div>
<div style="position:absolute;left:619px;top:199px;width:350px;height:36px;background:#f2f2f2;border-left:1px solid #e2e2e2;border-top:1px solid #e6e6e6"></div>
<svg style="left:641px;top:209px" width="16" height="16" viewBox="0 0 16 16"><rect x="0.5" y="0.5" width="15" height="15" rx="1" fill="#eee" stroke="#777"/><rect x="1" y="1" width="14" height="3" fill="#15c8f5"/><path d="M4 7 H5 M4 9.5 H5 M4 12 H5" stroke="#1a9adf" stroke-width="1.5"/><path d="M6.5 7 H12 M6.5 9.5 H12 M6.5 12 H12" stroke="#333" stroke-width="1.3"/></svg>
<div class="ns" style="position:absolute;left:726px;top:212px;">IDA View-A</div>
<svg style="left:920px;top:211px" width="14" height="14" viewBox="0 0 14 14"><rect x="0.5" y="0.5" width="13" height="13" rx="2" fill="#c4c4c4" stroke="#a8a8a8"/><path d="M4 4 L10 10 M10 4 L4 10" stroke="#fff" stroke-width="1.8"/></svg>
<div style="position:absolute;left:969px;top:197px;width:350px;height:39px;background:#f9f9f9;border:1px solid #dcdcdc;border-bottom:none"></div>
<svg style="left:991px;top:207px" width="16" height="16" viewBox="0 0 16 16"><rect x="0.5" y="0.5" width="15" height="15" rx="1" fill="#eee" stroke="#777"/><rect x="1" y="1" width="14" height="3" fill="#15c8f5"/><path d="M4 7 H5 M4 9.5 H5 M4 12 H5" stroke="#1a9adf" stroke-width="1.5"/><path d="M6.5 7 H12 M6.5 9.5 H12 M6.5 12 H12" stroke="#333" stroke-width="1.3"/></svg>
<div class="ns" style="position:absolute;left:1063px;top:210px;">Pseudocode-A</div>
<svg style="left:1270px;top:209px" width="15" height="15" viewBox="0 0 15 15"><rect x="0.5" y="0.5" width="14" height="14" rx="2" fill="#e26048" stroke="#c04030"/><path d="M4 4 L11 11 M11 4 L4 11" stroke="#fff" stroke-width="2"/></svg>
<div style="position:absolute;left:1319px;top:199px;width:349px;height:36px;background:#f2f2f2;border-left:1px solid #e2e2e2;border-top:1px solid #e6e6e6"></div>
<svg style="left:1341px;top:209px" width="16" height="16" viewBox="0 0 16 16"><rect x="0.5" y="0.5" width="15" height="15" fill="#40d890" stroke="#777"/><rect x="1" y="1" width="14" height="3" fill="#15c8f5"/><text x="8" y="13" font-family="Liberation Sans" font-weight="bold" font-size="9" text-anchor="middle" fill="#111">"</text></svg>
<div class="ns" style="position:absolute;left:1444px;top:212px;">Strings</div>
<svg style="left:1620px;top:211px" width="14" height="14" viewBox="0 0 14 14"><rect x="0.5" y="0.5" width="13" height="13" rx="2" fill="#c4c4c4" stroke="#a8a8a8"/><path d="M4 4 L10 10 M10 4 L4 10" stroke="#fff" stroke-width="1.8"/></svg>
<div style="position:absolute;left:1668px;top:199px;width:351px;height:36px;background:#f2f2f2;border-left:1px solid #e2e2e2;border-top:1px solid #e6e6e6"></div>
<svg style="left:1690px;top:209px" width="16" height="16" viewBox="0 0 16 16"><rect x="0.5" y="0.5" width="15" height="15" fill="#eee" stroke="#777"/><rect x="1" y="1" width="14" height="3" fill="#15c8f5"/><circle cx="8" cy="10" r="4" fill="none" stroke="#333" stroke-width="1.3"/><circle cx="8" cy="11" r="1.5" fill="#2a6"/></svg>
<div class="ns" style="position:absolute;left:1775px;top:212px;">Hex View-1</div>
<svg style="left:1969px;top:211px" width="14" height="14" viewBox="0 0 14 14"><rect x="0.5" y="0.5" width="13" height="13" rx="2" fill="#c4c4c4" stroke="#a8a8a8"/><path d="M4 4 L10 10 M10 4 L4 10" stroke="#fff" stroke-width="1.8"/></svg>
<div style="position:absolute;left:2019px;top:199px;width:350px;height:36px;background:#f2f2f2;border-left:1px solid #e2e2e2;border-top:1px solid #e6e6e6"></div>
<svg style="left:2041px;top:209px" width="16" height="16" viewBox="0 0 16 16"><rect x="0.5" y="0.5" width="15" height="15" fill="#eee" stroke="#777"/><rect x="1" y="1" width="14" height="3" fill="#15c8f5"/><circle cx="8" cy="10" r="4.5" fill="#222"/><rect x="7" y="7" width="2" height="6" fill="#fff"/></svg>
<div class="ns" style="position:absolute;left:2121px;top:212px;">Local Types</div>
<svg style="left:2320px;top:211px" width="14" height="14" viewBox="0 0 14 14"><rect x="0.5" y="0.5" width="13" height="13" rx="2" fill="#c4c4c4" stroke="#a8a8a8"/><path d="M4 4 L10 10 M10 4 L4 10" stroke="#fff" stroke-width="1.8"/></svg>
<div style="position:absolute;left:2369px;top:199px;width:351px;height:36px;background:#f2f2f2;border-left:1px solid #e2e2e2;border-top:1px solid #e6e6e6"></div>
<svg style="left:2391px;top:209px" width="16" height="16" viewBox="0 0 16 16"><rect x="0.5" y="0.5" width="15" height="15" fill="#eee" stroke="#777"/><rect x="1" y="1" width="14" height="3" fill="#15c8f5"/><path d="M2 5 L8 9 L2 13 Z" fill="#3c8"/><path d="M9 7 H14 M9 10 H14 M9 13 H14" stroke="#555" stroke-width="1.2"/></svg>
<div class="ns" style="position:absolute;left:2497px;top:212px;">Imports</div>
<svg style="left:2670px;top:211px" width="14" height="14" viewBox="0 0 14 14"><rect x="0.5" y="0.5" width="13" height="13" rx="2" fill="#c4c4c4" stroke="#a8a8a8"/><path d="M4 4 L10 10 M10 4 L4 10" stroke="#fff" stroke-width="1.8"/></svg>
<div style="position:absolute;left:2720px;top:199px;width:351px;height:36px;background:#f2f2f2;border-left:1px solid #e2e2e2;border-top:1px solid #e6e6e6"></div>
<svg style="left:2742px;top:209px" width="16" height="16" viewBox="0 0 16 16"><rect x="0.5" y="0.5" width="15" height="15" fill="#eee" stroke="#777"/><rect x="1" y="1" width="14" height="3" fill="#15c8f5"/><path d="M2 7 H8 M2 10 H8 M2 13 H8" stroke="#555" stroke-width="1.2"/><path d="M9 5 L15 9 L9 13 Z" fill="#3c8"/></svg>
<div class="ns" style="position:absolute;left:2846px;top:212px;">Exports</div>
<svg style="left:3021px;top:211px" width="14" height="14" viewBox="0 0 14 14"><rect x="0.5" y="0.5" width="13" height="13" rx="2" fill="#c4c4c4" stroke="#a8a8a8"/><path d="M4 4 L10 10 M10 4 L4 10" stroke="#fff" stroke-width="1.8"/></svg>
<div style="position:absolute;left:613px;top:236px;width:4px;height:1240px;background:#f0f0f0"></div>
<div style="position:absolute;left:617px;top:236px;width:2454px;height:1233px;background:#fff"></div>
<div style="position:absolute;left:702px;top:236px;width:5px;height:1233px;background:#f0f0f0"></div>
<div style="position:absolute;left:707px;top:333px;width:2330px;height:32px;background:#e4e4e4"></div>
<div style="position:absolute;left:707px;top:333px;width:2px;height:32px;background:#000"></div>
<div style="position:absolute;left:3037px;top:236px;width:34px;height:1232px;background:#f0f0f0;border-left:1px solid #fff"></div>
<div style="position:absolute;left:3053px;top:459px;width:6px;height:416px;background:#888;border-radius:3px"></div>
<div style="position:absolute;left:617px;top:240px;width:84px;height:1200px;overflow:hidden"><div class="code" style="color:#808080;text-align:right">18
19
20
21
22
23
24
25
26
27
28
29
30
31
32
33
34
35
36
37
38
39
40
41
42
43
44
45
46
47
48
49
50
51
52
53
54
</div></div>
<div style="position:absolute;left:708px;top:240px;width:2329px;height:1200px;overflow:hidden"><div class="code"><span class="k">  </span><span class="t">char filename[256]</span><span class="k">;</span><span class="v"> // [xsp+0h] [xbp-120h] BYREF</span>
<span class="k">  </span><span class="t">__int128 v19</span><span class="k">;</span><span class="v"> // [xsp+100h] [xbp-20h] BYREF</span>
<span class="k">  </span><span class="t">__int64 v20</span><span class="k">;</span><span class="v"> // [xsp+118h] [xbp-8h]</span>
 
<span class="k">  </span><span class="v">v20</span><span class="k"> = *(</span><span class="t">_QWORD *</span><span class="k">)(</span><span class="f">_ReadStatusReg</span><span class="k">(</span><span class="f">ARM64_SYSREG</span><span class="k">(3, 3, 13, 0, 2)) + 40);</span>
<span class="k">  </span><span class="v">mgr</span><span class="k"> = </span><span class="f">AAssetManager_fromJava</span><span class="k">(</span><span class="v">env</span><span class="k">, </span><span class="v">assetManager</span><span class="k">);</span>
<span class="k">  if ( </span><span class="v">mgr</span><span class="k"> )</span>
<span class="k">  {</span>
<span class="k">    </span><span class="v">mgr</span><span class="k"> = </span><span class="f">AAssetManager_open</span><span class="k">(</span><span class="v">mgr</span><span class="k">, </span><span class="s">&quot;qwqer&quot;</span><span class="k">, 3);</span>
<span class="k">    if ( </span><span class="v">mgr</span><span class="k"> )</span>
<span class="k">    {</span>
<span class="k">      </span><span class="v">mgr_1</span><span class="k"> = </span><span class="v">mgr</span><span class="k">;</span>
<span class="k">      </span><span class="v">Length</span><span class="k"> = </span><span class="f">AAsset_getLength</span><span class="k">(</span><span class="v">mgr</span><span class="k">);</span>
<span class="k">      if ( </span><span class="v">Length</span><span class="k"> &gt;= 1</span>
<span class="k">        &amp;&amp; (</span><span class="v">n</span><span class="k"> = </span><span class="v">Length</span><span class="k">, (</span><span class="v">Length</span><span class="k"> &amp; 0xF) == 0)</span>
<span class="k">        &amp;&amp; (</span><span class="v">Buffer</span><span class="k"> = </span><span class="f">AAsset_getBuffer</span><span class="k">(</span><span class="v">mgr_1</span><span class="k">)) != 0LL</span>
<span class="k">        &amp;&amp; (</span><span class="v">Buffer_1</span><span class="k"> = </span><span class="v">Buffer</span><span class="k">, (</span><span class="v">ptr_1</span><span class="k"> = (</span><span class="t">char *</span><span class="k">)</span><span class="f">malloc</span><span class="k">(</span><span class="v">n</span><span class="k">)) != 0LL) )</span>
<span class="k">      {</span>
<span class="k">        </span><span class="v">ptr</span><span class="k"> = </span><span class="v">ptr_1</span><span class="k">;</span>
<span class="k">        </span><span class="v">v19</span><span class="k"> = *(</span><span class="t">_OWORD *</span><span class="k">)</span><span class="s">&quot;p0l1st&quot;</span><span class="k">;</span>
<span class="k">        </span><span class="v">v10</span><span class="k"> = </span><span class="f">sub_1458</span><span class="k">(&amp;</span><span class="v">v19</span><span class="k">, 16LL, </span><span class="v">Buffer_1</span><span class="k">, </span><span class="v">ptr_1</span><span class="k">, (</span><span class="t">unsigned int</span><span class="k">)</span><span class="v">n</span><span class="k">);</span>
<span class="k">        </span><span class="f">AAsset_close</span><span class="k">(</span><span class="v">mgr_1</span><span class="k">);</span>
<span class="k">        if ( </span><span class="v">v10</span><span class="k"> )</span>
<span class="k">          goto LABEL_8;</span>
<span class="k">        </span><span class="v">n_2</span><span class="k"> = (</span><span class="t">unsigned __int8</span><span class="k">)</span><span class="v">ptr</span><span class="k">[</span><span class="v">n</span><span class="k"> - 1];</span>
<span class="k">        if ( (</span><span class="t">unsigned int</span><span class="k">)(</span><span class="v">n_2</span><span class="k"> - 1) &lt;= 0xF )</span>
<span class="k">        {</span>
<span class="k">          if ( </span><span class="v">n</span><span class="k"> &lt; </span><span class="v">n_2</span><span class="k"> )</span>
<span class="k">          {</span>
<span class="k">LABEL_17:</span>
<span class="k">            </span><span class="v">n</span><span class="k"> -= </span><span class="v">n_2</span><span class="k">;</span>
<span class="k">          }</span>
<span class="k">          else</span>
<span class="k">          {</span>
<span class="k">            </span><span class="v">v12</span><span class="k"> = -(</span><span class="t">__int64</span><span class="k">)</span><span class="v">n_2</span><span class="k">;</span>
<span class="k">            while ( (</span><span class="t">unsigned __int8</span><span class="k">)</span><span class="v">ptr</span><span class="k">[</span><span class="v">n</span><span class="k"> + </span><span class="v">v12</span><span class="k">] == (</span><span class="t">_DWORD</span><span class="k">)</span><span class="v">n_2</span><span class="k"> )</span>
<span class="k">            {</span>
<span class="k">              if ( </span><span class="f">__CFADD__</span><span class="k">(</span><span class="v">v12</span><span class="k">++, 1LL) )</span></div></div>
<div style="position:absolute;left:629px;top:374px;width:14px;height:14px;background:#10c8f8;border-radius:50%"></div>
<div style="position:absolute;left:629px;top:406px;width:14px;height:14px;background:#10c8f8;border-radius:50%"></div>
<div style="position:absolute;left:629px;top:438px;width:14px;height:14px;background:#10c8f8;border-radius:50%"></div>
<div style="position:absolute;left:629px;top:502px;width:14px;height:14px;background:#10c8f8;border-radius:50%"></div>
<div style="position:absolute;left:629px;top:534px;width:14px;height:14px;background:#10c8f8;border-radius:50%"></div>
<div style="position:absolute;left:629px;top:598px;width:14px;height:14px;background:#10c8f8;border-radius:50%"></div>
<div style="position:absolute;left:629px;top:630px;width:14px;height:14px;background:#10c8f8;border-radius:50%"></div>
<div style="position:absolute;left:629px;top:662px;width:14px;height:14px;background:#10c8f8;border-radius:50%"></div>
<div style="position:absolute;left:629px;top:822px;width:14px;height:14px;background:#10c8f8;border-radius:50%"></div>
<div style="position:absolute;left:629px;top:854px;width:14px;height:14px;background:#10c8f8;border-radius:50%"></div>
<div style="position:absolute;left:629px;top:886px;width:14px;height:14px;background:#10c8f8;border-radius:50%"></div>
<div style="position:absolute;left:629px;top:918px;width:14px;height:14px;background:#10c8f8;border-radius:50%"></div>
<div style="position:absolute;left:629px;top:950px;width:14px;height:14px;background:#10c8f8;border-radius:50%"></div>
<div style="position:absolute;left:629px;top:982px;width:14px;height:14px;background:#10c8f8;border-radius:50%"></div>
<div style="position:absolute;left:629px;top:1014px;width:14px;height:14px;background:#10c8f8;border-radius:50%"></div>
<div style="position:absolute;left:629px;top:1046px;width:14px;height:14px;background:#10c8f8;border-radius:50%"></div>
<div style="position:absolute;left:629px;top:1110px;width:14px;height:14px;background:#10c8f8;border-radius:50%"></div>
<div style="position:absolute;left:629px;top:1206px;width:14px;height:14px;background:#10c8f8;border-radius:50%"></div>
<div style="position:absolute;left:629px;top:1334px;width:14px;height:14px;background:#10c8f8;border-radius:50%"></div>
<div style="position:absolute;left:629px;top:1366px;width:14px;height:14px;background:#10c8f8;border-radius:50%"></div>
<div style="position:absolute;left:707px;top:1437px;width:2330px;height:32px;background:#f0f0f0"></div>
<div class="ns" style="position:absolute;left:710px;top:1443px;font-size:23.3px;letter-spacing:0">00001858</div>
<div style="position:absolute;left:822px;top:1440px;width:1px;height:28px;background:#d8d8d8"></div>
<div class="ns" style="position:absolute;left:827px;top:1443px;font-size:23.3px;letter-spacing:0">sub_1838:21 (1858)</div>
<div style="position:absolute;left:1081px;top:1440px;width:1px;height:28px;background:#d8d8d8"></div>
<div style="position:absolute;left:1101px;top:1440px;width:1px;height:28px;background:#d8d8d8"></div>
<div style="position:absolute;left:707px;top:1468px;width:2364px;height:2px;background:linear-gradient(#5a9ad6 0 25%,#0a64c8 25% 75%,#f0f0f0 75%)"></div>
<div style="position:absolute;left:617px;top:1437px;width:85px;height:32px;background:#fff"></div>
<div style="position:absolute;left:0px;top:1474px;width:3071px;height:1px;background:#838c96"></div>
<div style="position:absolute;left:0px;top:1475px;width:3071px;height:33px;background:#f0f0f0;border-left:1px solid #838c96;border-bottom:1px solid #838c96;box-shadow:inset 0 1px 0 #fff"></div>
<svg style="left:4px;top:1483px" width="16" height="16" viewBox="0 0 16 16"><rect x="0.5" y="0.5" width="15" height="15" rx="1" fill="#eee" stroke="#777"/><rect x="1" y="1" width="14" height="3" fill="#15c8f5"/><path d="M4 7 H5 M4 9.5 H5 M4 12 H5" stroke="#1a9adf" stroke-width="1.5"/><path d="M6.5 7 H12 M6.5 9.5 H12 M6.5 12 H12" stroke="#333" stroke-width="1.3"/></svg>
<div class="ns" style="position:absolute;left:32px;top:1484px;">Output</div>
<svg style="left:2984px;top:1482px" width="84" height="22" viewBox="0 0 84 22"><g fill="none" stroke="#333" stroke-width="2"><rect x="1" y="1" width="18" height="18"/><rect x="41" y="1" width="10" height="10"/><rect x="37" y="7" width="10" height="10" fill="#f0f0f0"/><path d="M67.5 3 L80.5 16 M80.5 3 L67.5 16" stroke-width="3"/></g><rect x="1" y="1" width="18" height="5" fill="#333"/><rect x="41" y="1" width="10" height="3" fill="#333"/><rect x="37" y="7" width="10" height="3" fill="#333"/></svg>
<div style="position:absolute;left:0px;top:1508px;width:3071px;height:236px;background:#fff"></div>
<div style="position:absolute;left:3037px;top:1508px;width:34px;height:236px;background:#f0f0f0"></div>
<div style="position:absolute;left:3053px;top:1673px;width:6px;height:35px;background:#888;border-radius:3px"></div>
<div style="position:absolute;left:0px;top:1508px;width:3037px;height:2px;background:#fff"></div>
<div style="position:absolute;left:0px;top:1510px;width:3037px;height:1px;background:#e8e8e8"></div>
<div style="position:absolute;left:5px;top:1511px;width:3030px;height:232px;overflow:hidden"><div class="code" style="color:#000;position:absolute;top:-21px;left:2px">[hrt] 18B8 sub_1838: Var &quot;v9&quot; was renamed to &quot;ptr_1&quot;
[hrt] 18D8 sub_1838: Function 1458 sub_1458 was recast to &quot;__int64 __fastcall(_QWORD, _QWORD n16, _QWORD Buffer, _QWORD ptr, _QWORD n)&quot;
[hrt] 1948 sub_1838: Var &quot;v11&quot; was renamed to &quot;n_2&quot;
[hrt] 1974 sub_1838: Function 1A30 sub_1A30 was recast to &quot;__int64 __fastcall(_QWORD filename)&quot;
0: using guessed type int dword_0;
3F20: using guessed type __int64 handle;
3F28: using guessed type _UNKNOWN *off_3F28;
3F30: using guessed type char byte_3F30;</div></div>
<div style="position:absolute;left:0px;top:1743px;width:3071px;height:2px;background:#a0a0a0"></div>
<div style="position:absolute;left:0px;top:1745px;width:3071px;height:47px;background:#f0f0f0"></div>
<div style="position:absolute;left:3px;top:1747px;width:92px;height:42px;background:#fafafa;border:1px solid #d0d0d0;border-radius:3px"></div>
<div class="ns" style="position:absolute;left:13px;top:1760px;">Python</div>
<div style="position:absolute;left:101px;top:1750px;width:2966px;height:37px;background:#fff;border-top:1px solid #e8e8e8;border-bottom:2px solid #777"></div>
<div style="position:absolute;left:0px;top:1790px;width:3071px;height:1px;background:#a0a0a0"></div>
<div style="position:absolute;left:0px;top:1791px;width:3071px;height:34px;background:#f0f0f0"></div>
<div class="ns" style="position:absolute;left:2px;top:1799px;font-size:23.3px;letter-spacing:0">AU:  idle</div>
<div style="position:absolute;left:157px;top:1795px;width:1px;height:28px;background:#d8d8d8"></div>
<div class="ns" style="position:absolute;left:163px;top:1799px;font-size:23.3px;letter-spacing:0">Down</div>
<div style="position:absolute;left:233px;top:1795px;width:1px;height:28px;background:#d8d8d8"></div>
<div class="ns" style="position:absolute;left:239px;top:1799px;font-size:23.3px;letter-spacing:0">Disk: 258GB</div>
<div style="position:absolute;left:393px;top:1795px;width:1px;height:28px;background:#d8d8d8"></div></div></body></html>
